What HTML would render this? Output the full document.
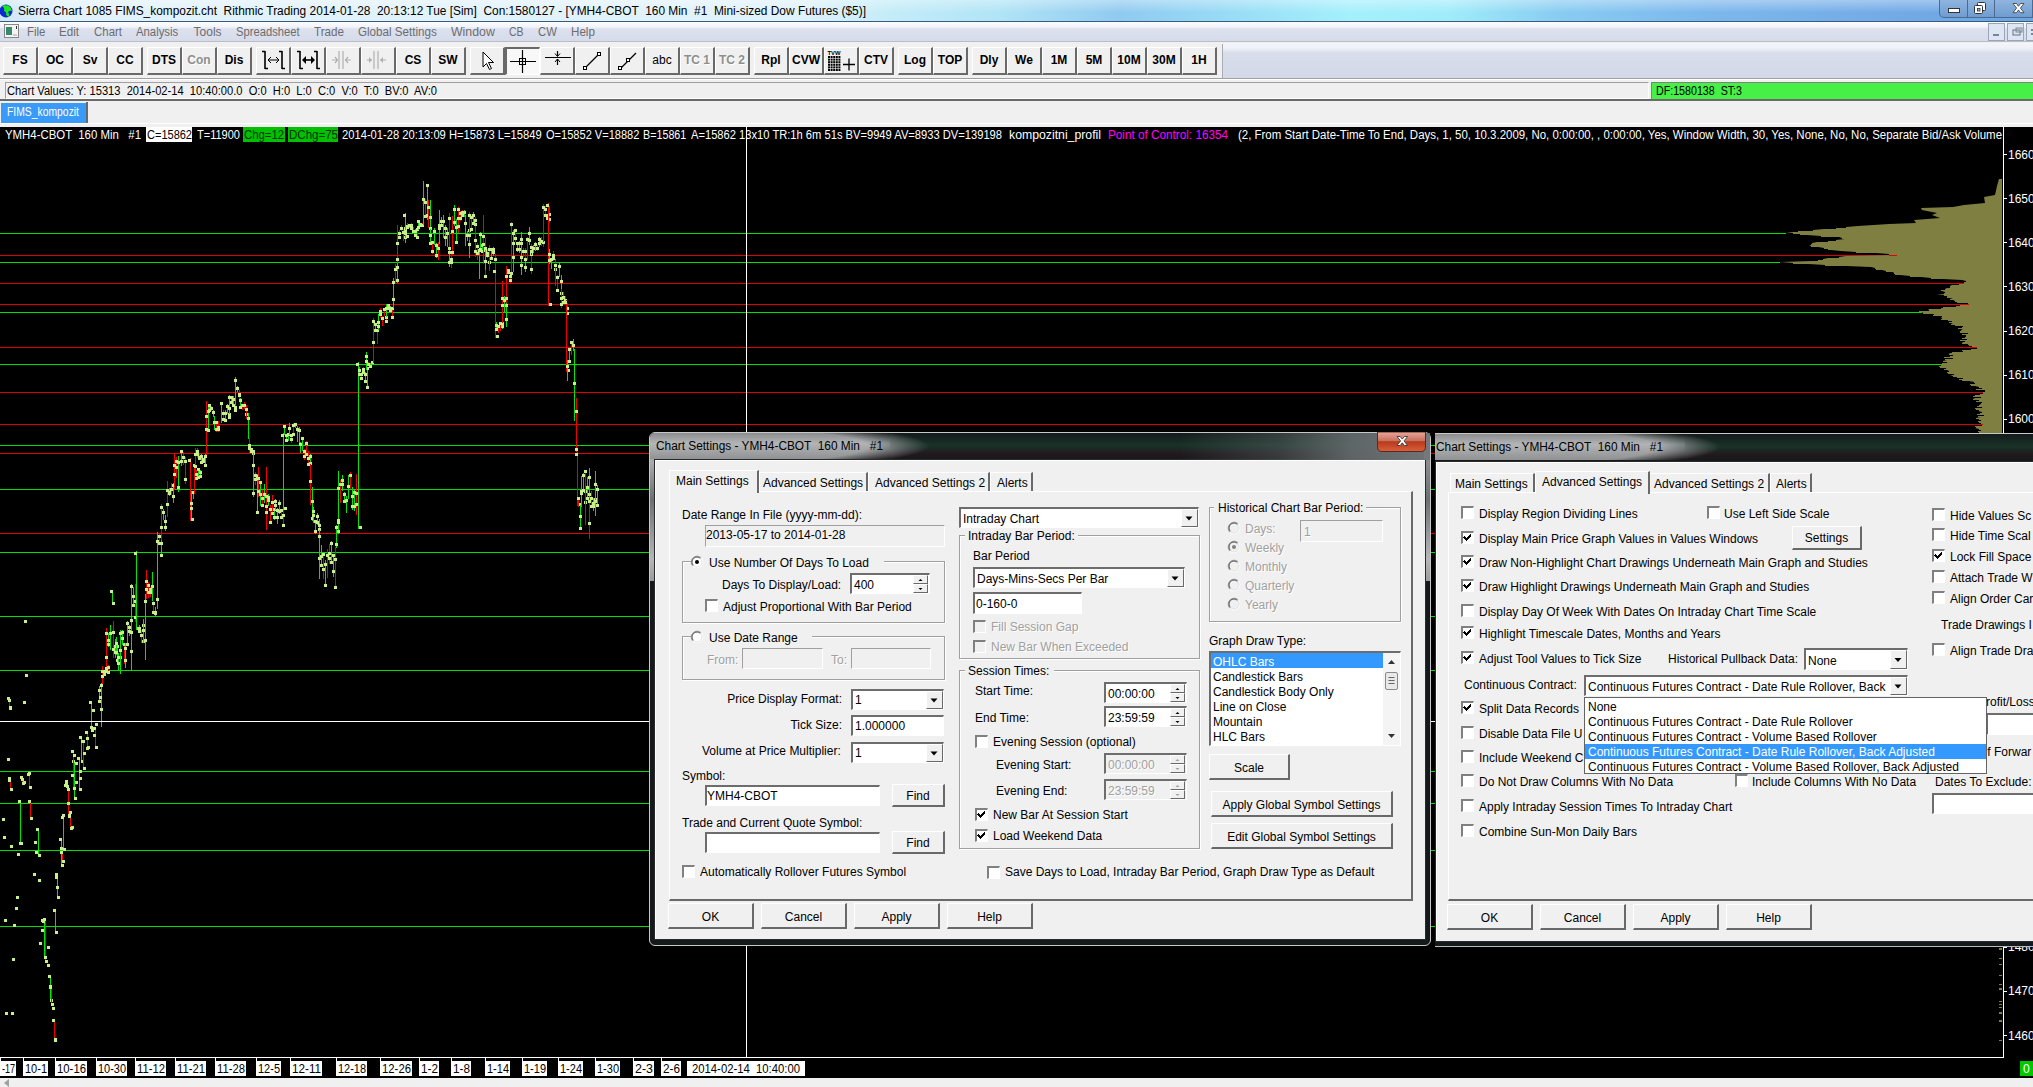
<!DOCTYPE html><html><head><meta charset="utf-8"><title>Sierra Chart</title><style>
html,body{margin:0;padding:0;width:2033px;height:1087px;overflow:hidden;background:#000;}
body{position:relative;font-family:"Liberation Sans",sans-serif;}
div,svg{position:absolute;}
.t{white-space:pre;}
</style></head><body>
<div style="left:0px;top:0px;width:2033px;height:21px;background:linear-gradient(90deg,#cfe6f4 0px,#e2f2fa 60px,#e0f2fa 800px,#c4ecf8 890px,#b0e4f6 1000px,#90caf0 1120px,#98dcf6 1230px,#a4f0fc 1350px,#a0ecfa 1450px,#88ccf2 1560px,#7cb8ec 1700px,#72aae6 1900px,#6ea6e2 2033px);"></div>
<div style="left:0px;top:0px;width:2033px;height:21px;background:linear-gradient(180deg,rgba(255,255,255,0.35),rgba(255,255,255,0) 60%);"></div>
<div style="left:0px;top:21px;width:2033px;height:1px;background:#3c5a7c;"></div>
<svg style="left:0px;top:2px" width="14" height="17"><circle cx="6" cy="9" r="6.5" fill="#0a28d8"/><path d="M2 4 q3 2 2 5 q3 1 2 4 l3 2 q1 -3 -1 -5 q2 -2 4 -1 q-1 -4 -4 -6 q-2 1 -3 0 z" fill="#1ee61e"/></svg>
<div class="t" style="left:18.00px;top:4px;font-size:12px;line-height:14px;color:#000;transform:scaleX(0.9912);transform-origin:0 0;">Sierra Chart 1085 FIMS_kompozit.cht  Rithmic Trading 2014-01-28  20:13:12 Tue [Sim]  Con:1580127 - [YMH4-CBOT  160 Min  #1  Mini-sized Dow Futures ($5)]</div>
<div style="left:1939px;top:0px;width:94px;height:18px;background:linear-gradient(180deg,#8fb4de,#6f9cd0);border:1px solid #4a6a90;border-top:none;border-radius:0 0 0 5px;box-sizing:border-box;"></div>
<div style="left:1967px;top:0px;width:1px;height:17px;background:#4a6a90;"></div>
<div style="left:1994px;top:0px;width:1px;height:17px;background:#4a6a90;"></div>
<svg style="left:1939px;top:0px" width="94" height="18"><rect x="9.5" y="8.5" width="11" height="4" fill="#fff" stroke="#333" stroke-width="1"/><rect x="38.5" y="2.5" width="8" height="8" rx="1" fill="#fff" stroke="#333"/><rect x="35.5" y="5.5" width="8" height="8" rx="1" fill="#fff" stroke="#333"/><rect x="38.5" y="8.5" width="2.5" height="2.5" fill="#8fb4de" stroke="#333" stroke-width="0.8"/><path d="M74 3.5 h3.5 l2 2.8 l2 -2.8 h3.5 l-3.6 4.6 l3.6 4.6 h-3.5 l-2 -2.8 l-2 2.8 h-3.5 l3.6 -4.6 z" fill="#fff" stroke="#333" stroke-width="0.8"/></svg>
<div style="left:0px;top:22px;width:2033px;height:20px;background:linear-gradient(180deg,#fbfcfe 0,#f2f4fa 5px,#dde1ee 7px,#d6dbeb 19px);"></div>
<div style="left:0px;top:41px;width:2033px;height:1px;background:#b9bdc6;"></div>
<svg style="left:4px;top:24px" width="16" height="14"><rect x="0.5" y="0.5" width="14" height="13" fill="#f4f4f4" stroke="#888"/><rect x="2" y="3" width="6" height="8" fill="#3a8a6a"/><rect x="12" y="2" width="1" height="3" fill="#333"/><rect x="9" y="10" width="4" height="2" fill="#ccc"/></svg>
<div class="t" style="left:27.40px;top:25px;font-size:12px;line-height:14px;color:#6d6d6d;transform:scaleX(0.9464);transform-origin:0 0;">File</div>
<div class="t" style="left:59.00px;top:25px;font-size:12px;line-height:14px;color:#6d6d6d;transform:scaleX(0.9672);transform-origin:0 0;">Edit</div>
<div class="t" style="left:93.50px;top:25px;font-size:12px;line-height:14px;color:#6d6d6d;transform:scaleX(0.9542);transform-origin:0 0;">Chart</div>
<div class="t" style="left:136.30px;top:25px;font-size:12px;line-height:14px;color:#6d6d6d;transform:scaleX(0.9444);transform-origin:0 0;">Analysis</div>
<div class="t" style="left:193.60px;top:25px;font-size:12px;line-height:14px;color:#6d6d6d;">Tools</div>
<div class="t" style="left:236.00px;top:25px;font-size:12px;line-height:14px;color:#6d6d6d;transform:scaleX(0.9360);transform-origin:0 0;">Spreadsheet</div>
<div class="t" style="left:314.00px;top:25px;font-size:12px;line-height:14px;color:#6d6d6d;transform:scaleX(0.9675);transform-origin:0 0;">Trade</div>
<div class="t" style="left:358.00px;top:25px;font-size:12px;line-height:14px;color:#6d6d6d;transform:scaleX(0.9683);transform-origin:0 0;">Global Settings</div>
<div class="t" style="left:451.00px;top:25px;font-size:12px;line-height:14px;color:#6d6d6d;transform:scaleX(1.0262);transform-origin:0 0;">Window</div>
<div class="t" style="left:509.00px;top:25px;font-size:12px;line-height:14px;color:#6d6d6d;transform:scaleX(0.8758);transform-origin:0 0;">CB</div>
<div class="t" style="left:538.00px;top:25px;font-size:12px;line-height:14px;color:#6d6d6d;transform:scaleX(0.9404);transform-origin:0 0;">CW</div>
<div class="t" style="left:571.00px;top:25px;font-size:12px;line-height:14px;color:#6d6d6d;transform:scaleX(0.9684);transform-origin:0 0;">Help</div>
<div style="left:1988px;top:23px;width:17px;height:18px;background:#dde6f2;border:1px solid #9aa6b8;box-sizing:border-box;"></div>
<div style="left:2007px;top:23px;width:17px;height:18px;background:#dde6f2;border:1px solid #9aa6b8;box-sizing:border-box;"></div>
<div style="left:2026px;top:23px;width:17px;height:18px;background:#dde6f2;border:1px solid #9aa6b8;box-sizing:border-box;"></div>
<svg style="left:1988px;top:23px" width="45" height="18"><rect x="5" y="11" width="6" height="2" fill="#7a8596"/><rect x="25" y="7" width="7" height="5" fill="none" stroke="#7a8596" stroke-width="1.2"/><rect x="28" y="5" width="6" height="4" fill="none" stroke="#7a8596" stroke-width="1"/><rect x="43" y="6" width="2" height="2" fill="#7a8596"/><rect x="43" y="10" width="2" height="2" fill="#7a8596"/></svg>
<div style="left:0px;top:42px;width:2033px;height:37px;background:#f0f0f0;"></div>
<div style="left:1223px;top:43px;width:810px;height:35px;background:linear-gradient(180deg,#f3f5fa 0,#eef1f8 5px,#d8ddeb 10px,#d4d9e9 34px);"></div>
<div style="left:1222px;top:44px;width:1px;height:34px;background:#a8acb4;"></div>
<div style="left:0px;top:78px;width:2033px;height:1px;background:#a0a0a0;"></div>
<div style="left:0px;top:79px;width:2033px;height:1px;background:#fff;"></div>
<div style="left:3px;top:47px;width:35px;height:28px;background:#f0f0f0;border-top:1px solid #fff;border-left:1px solid #fff;border-right:2px solid #696969;border-bottom:2px solid #696969;box-sizing:border-box;"></div>
<div class="t" style="left:12.33px;top:53px;font-size:12px;line-height:14px;color:#000;font-weight:bold;">FS</div>
<div style="left:38px;top:47px;width:35px;height:28px;background:#f0f0f0;border-top:1px solid #fff;border-left:1px solid #fff;border-right:2px solid #696969;border-bottom:2px solid #696969;box-sizing:border-box;"></div>
<div class="t" style="left:46.00px;top:53px;font-size:12px;line-height:14px;color:#000;font-weight:bold;">OC</div>
<div style="left:73px;top:47px;width:35px;height:28px;background:#f0f0f0;border-top:1px solid #fff;border-left:1px solid #fff;border-right:2px solid #696969;border-bottom:2px solid #696969;box-sizing:border-box;"></div>
<div class="t" style="left:82.66px;top:53px;font-size:12px;line-height:14px;color:#000;font-weight:bold;">Sv</div>
<div style="left:108px;top:47px;width:35px;height:28px;background:#f0f0f0;border-top:1px solid #fff;border-left:1px solid #fff;border-right:2px solid #696969;border-bottom:2px solid #696969;box-sizing:border-box;"></div>
<div class="t" style="left:116.33px;top:53px;font-size:12px;line-height:14px;color:#000;font-weight:bold;">CC</div>
<div style="left:147px;top:47px;width:35px;height:28px;background:#f0f0f0;border-top:1px solid #fff;border-left:1px solid #fff;border-right:2px solid #696969;border-bottom:2px solid #696969;box-sizing:border-box;"></div>
<div class="t" style="left:152.00px;top:53px;font-size:12px;line-height:14px;color:#000;font-weight:bold;">DTS</div>
<div style="left:182px;top:47px;width:35px;height:28px;background:#f0f0f0;border-top:1px solid #fff;border-left:1px solid #fff;border-right:2px solid #696969;border-bottom:2px solid #696969;box-sizing:border-box;"></div>
<div class="t" style="left:187.34px;top:53px;font-size:12px;line-height:14px;color:#8e8e8e;font-weight:bold;text-shadow:1px 1px 0 #fff;">Con</div>
<div style="left:217px;top:47px;width:35px;height:28px;background:#f0f0f0;border-top:1px solid #fff;border-left:1px solid #fff;border-right:2px solid #696969;border-bottom:2px solid #696969;box-sizing:border-box;"></div>
<div class="t" style="left:224.66px;top:53px;font-size:12px;line-height:14px;color:#000;font-weight:bold;">Dis</div>
<div style="left:256px;top:47px;width:35px;height:28px;background:#f0f0f0;border-top:1px solid #fff;border-left:1px solid #fff;border-right:2px solid #696969;border-bottom:2px solid #696969;box-sizing:border-box;"></div>
<div style="left:291px;top:47px;width:35px;height:28px;background:#f0f0f0;border-top:1px solid #fff;border-left:1px solid #fff;border-right:2px solid #696969;border-bottom:2px solid #696969;box-sizing:border-box;"></div>
<div style="left:326px;top:47px;width:35px;height:28px;background:#f0f0f0;border-top:1px solid #fff;border-left:1px solid #fff;border-right:2px solid #696969;border-bottom:2px solid #696969;box-sizing:border-box;"></div>
<div style="left:361px;top:47px;width:35px;height:28px;background:#f0f0f0;border-top:1px solid #fff;border-left:1px solid #fff;border-right:2px solid #696969;border-bottom:2px solid #696969;box-sizing:border-box;"></div>
<div style="left:396px;top:47px;width:35px;height:28px;background:#f0f0f0;border-top:1px solid #fff;border-left:1px solid #fff;border-right:2px solid #696969;border-bottom:2px solid #696969;box-sizing:border-box;"></div>
<div class="t" style="left:404.66px;top:53px;font-size:12px;line-height:14px;color:#000;font-weight:bold;">CS</div>
<div style="left:431px;top:47px;width:35px;height:28px;background:#f0f0f0;border-top:1px solid #fff;border-left:1px solid #fff;border-right:2px solid #696969;border-bottom:2px solid #696969;box-sizing:border-box;"></div>
<div class="t" style="left:438.33px;top:53px;font-size:12px;line-height:14px;color:#000;font-weight:bold;">SW</div>
<div style="left:470px;top:47px;width:35px;height:28px;background:#f0f0f0;border-top:1px solid #fff;border-left:1px solid #fff;border-right:2px solid #696969;border-bottom:2px solid #696969;box-sizing:border-box;"></div>
<div style="left:505px;top:47px;width:35px;height:28px;background:#f8f8f8;border-top:2px solid #696969;border-left:2px solid #696969;border-right:1px solid #fff;border-bottom:1px solid #fff;box-sizing:border-box;"></div>
<div style="left:540px;top:47px;width:35px;height:28px;background:#f0f0f0;border-top:1px solid #fff;border-left:1px solid #fff;border-right:2px solid #696969;border-bottom:2px solid #696969;box-sizing:border-box;"></div>
<div style="left:575px;top:47px;width:35px;height:28px;background:#f0f0f0;border-top:1px solid #fff;border-left:1px solid #fff;border-right:2px solid #696969;border-bottom:2px solid #696969;box-sizing:border-box;"></div>
<div style="left:610px;top:47px;width:35px;height:28px;background:#f0f0f0;border-top:1px solid #fff;border-left:1px solid #fff;border-right:2px solid #696969;border-bottom:2px solid #696969;box-sizing:border-box;"></div>
<div style="left:610px;top:47px;width:35px;height:28px;background:#f0f0f0;border-top:1px solid #fff;border-left:1px solid #fff;border-right:2px solid #696969;border-bottom:2px solid #696969;box-sizing:border-box;"></div>
<div style="left:645px;top:47px;width:35px;height:28px;background:#f0f0f0;border-top:1px solid #fff;border-left:1px solid #fff;border-right:2px solid #696969;border-bottom:2px solid #696969;box-sizing:border-box;"></div>
<div class="t" style="left:652.33px;top:53px;font-size:12px;line-height:14px;color:#000;">abc</div>
<div style="left:680px;top:47px;width:35px;height:28px;background:#f0f0f0;border-top:1px solid #fff;border-left:1px solid #fff;border-right:2px solid #696969;border-bottom:2px solid #696969;box-sizing:border-box;"></div>
<div class="t" style="left:684.00px;top:53px;font-size:12px;line-height:14px;color:#8e8e8e;font-weight:bold;text-shadow:1px 1px 0 #fff;">TC 1</div>
<div style="left:715px;top:47px;width:35px;height:28px;background:#f0f0f0;border-top:1px solid #fff;border-left:1px solid #fff;border-right:2px solid #696969;border-bottom:2px solid #696969;box-sizing:border-box;"></div>
<div class="t" style="left:719.00px;top:53px;font-size:12px;line-height:14px;color:#8e8e8e;font-weight:bold;text-shadow:1px 1px 0 #fff;">TC 2</div>
<div style="left:754px;top:47px;width:35px;height:28px;background:#f0f0f0;border-top:1px solid #fff;border-left:1px solid #fff;border-right:2px solid #696969;border-bottom:2px solid #696969;box-sizing:border-box;"></div>
<div class="t" style="left:761.33px;top:53px;font-size:12px;line-height:14px;color:#000;font-weight:bold;">Rpl</div>
<div style="left:789px;top:47px;width:35px;height:28px;background:#f0f0f0;border-top:1px solid #fff;border-left:1px solid #fff;border-right:2px solid #696969;border-bottom:2px solid #696969;box-sizing:border-box;"></div>
<div class="t" style="left:792.00px;top:53px;font-size:12px;line-height:14px;color:#000;font-weight:bold;">CVW</div>
<div style="left:824px;top:47px;width:35px;height:28px;background:#f0f0f0;border-top:1px solid #fff;border-left:1px solid #fff;border-right:2px solid #696969;border-bottom:2px solid #696969;box-sizing:border-box;"></div>
<div style="left:859px;top:47px;width:35px;height:28px;background:#f0f0f0;border-top:1px solid #fff;border-left:1px solid #fff;border-right:2px solid #696969;border-bottom:2px solid #696969;box-sizing:border-box;"></div>
<div class="t" style="left:864.00px;top:53px;font-size:12px;line-height:14px;color:#000;font-weight:bold;">CTV</div>
<div style="left:898px;top:47px;width:35px;height:28px;background:#f0f0f0;border-top:1px solid #fff;border-left:1px solid #fff;border-right:2px solid #696969;border-bottom:2px solid #696969;box-sizing:border-box;"></div>
<div class="t" style="left:904.00px;top:53px;font-size:12px;line-height:14px;color:#000;font-weight:bold;">Log</div>
<div style="left:933px;top:47px;width:35px;height:28px;background:#f0f0f0;border-top:1px solid #fff;border-left:1px solid #fff;border-right:2px solid #696969;border-bottom:2px solid #696969;box-sizing:border-box;"></div>
<div class="t" style="left:937.77px;top:53px;font-size:12px;line-height:14px;color:#000;font-weight:bold;">TOP</div>
<div style="left:972px;top:47px;width:35px;height:28px;background:#f0f0f0;border-top:1px solid #fff;border-left:1px solid #fff;border-right:2px solid #696969;border-bottom:2px solid #696969;box-sizing:border-box;"></div>
<div class="t" style="left:979.66px;top:53px;font-size:12px;line-height:14px;color:#000;font-weight:bold;">Dly</div>
<div style="left:1007px;top:47px;width:35px;height:28px;background:#f0f0f0;border-top:1px solid #fff;border-left:1px solid #fff;border-right:2px solid #696969;border-bottom:2px solid #696969;box-sizing:border-box;"></div>
<div class="t" style="left:1015.11px;top:53px;font-size:12px;line-height:14px;color:#000;font-weight:bold;">We</div>
<div style="left:1042px;top:47px;width:35px;height:28px;background:#f0f0f0;border-top:1px solid #fff;border-left:1px solid #fff;border-right:2px solid #696969;border-bottom:2px solid #696969;box-sizing:border-box;"></div>
<div class="t" style="left:1050.66px;top:53px;font-size:12px;line-height:14px;color:#000;font-weight:bold;">1M</div>
<div style="left:1077px;top:47px;width:35px;height:28px;background:#f0f0f0;border-top:1px solid #fff;border-left:1px solid #fff;border-right:2px solid #696969;border-bottom:2px solid #696969;box-sizing:border-box;"></div>
<div class="t" style="left:1085.66px;top:53px;font-size:12px;line-height:14px;color:#000;font-weight:bold;">5M</div>
<div style="left:1112px;top:47px;width:35px;height:28px;background:#f0f0f0;border-top:1px solid #fff;border-left:1px solid #fff;border-right:2px solid #696969;border-bottom:2px solid #696969;box-sizing:border-box;"></div>
<div class="t" style="left:1117.33px;top:53px;font-size:12px;line-height:14px;color:#000;font-weight:bold;">10M</div>
<div style="left:1147px;top:47px;width:35px;height:28px;background:#f0f0f0;border-top:1px solid #fff;border-left:1px solid #fff;border-right:2px solid #696969;border-bottom:2px solid #696969;box-sizing:border-box;"></div>
<div class="t" style="left:1152.33px;top:53px;font-size:12px;line-height:14px;color:#000;font-weight:bold;">30M</div>
<div style="left:1182px;top:47px;width:35px;height:28px;background:#f0f0f0;border-top:1px solid #fff;border-left:1px solid #fff;border-right:2px solid #696969;border-bottom:2px solid #696969;box-sizing:border-box;"></div>
<div class="t" style="left:1191.33px;top:53px;font-size:12px;line-height:14px;color:#000;font-weight:bold;">1H</div>
<svg style="left:0;top:39px" width="900" height="36"><g stroke="#000" stroke-width="1.6" fill="none"><path d="M265 12 v18 M262 12.5 h3 M265 29.5 h3 M282 12 v18 M279 12.5 h3 M282 29.5 h3"/></g><path d="M268 21 h11 M268 21 l3 -3 M268 21 l3 3 M279 21 l-3 -3 M279 21 l-3 3" stroke="#000" stroke-width="1" fill="none"/><g stroke="#000" stroke-width="1.6" fill="none"><path d="M300 12 v18 M297 12.5 h3 M300 29.5 h3 M317 12 v18 M314 12.5 h3 M317 29.5 h3"/></g><path d="M303 21 h11" stroke="#000" stroke-width="1.6"/><path d="M302 21 l4 -4 v8 z M315 21 l-4 -4 v8 z" fill="#000"/><g stroke="#b0b0b0" stroke-width="1.2" fill="none"><path d="M339 12 v18 M343 12 v18 M332 21 h5 M335 18 l2.5 3 l-2.5 3 M345 21 h6 M348 18 l-2.5 3 l2.5 3"/><path d="M374 12 v18 M378 12 v18 M367 21 h5 M386 21 h-6"/></g><path d="M372 21 l-3 -3 v6 z M380 21 l3 -3 v6 z" fill="#b0b0b0"/></svg>
<svg style="left:0;top:41px" width="900" height="36"><path d="M483 11 l0 15 l3.5 -3.5 l3 6 l2 -1 l-3 -6 l5 0 z" fill="#fff" stroke="#000" stroke-width="1"/><path d="M510 20.5 h26 M522.5 9 v23" stroke="#000" stroke-width="1.2"/><rect x="519.5" y="17.5" width="6" height="6" fill="none" stroke="#000" stroke-width="1"/><path d="M545 16.5 h26 M557.5 10 v5 M557.5 18 v6" stroke="#000" stroke-width="1.2"/><path d="M555 12.5 l2.5 3 l2.5 -3 M555 21 l2.5 -3 l2.5 3" stroke="#000" fill="none"/><path d="M585 27 l14 -14" stroke="#000" stroke-width="1.2"/><rect x="583.5" y="25.5" width="3" height="3" fill="#fff" stroke="#000"/><rect x="597.5" y="11.5" width="3" height="3" fill="#fff" stroke="#000"/><path d="M621 27 l15 -15" stroke="#000" stroke-width="1.2"/><rect x="618.5" y="25.5" width="3" height="3" fill="#fff" stroke="#000"/><rect x="626.5" y="17.5" width="3" height="3" fill="#fff" stroke="#000"/></svg>
<svg style="left:823px;top:47px" width="35" height="28"><text x="4.5" y="7.5" font-size="6" font-family="Liberation Sans" font-weight="bold" textLength="13" lengthAdjust="spacingAndGlyphs">TVW</text><rect x="5.0" y="9.0" width="2" height="2" fill="#000"/><rect x="7.6" y="9.0" width="2" height="2" fill="#000"/><rect x="10.2" y="9.0" width="2" height="2" fill="#000"/><rect x="12.8" y="9.0" width="2" height="2" fill="#000"/><rect x="15.4" y="9.0" width="2" height="2" fill="#000"/><rect x="5.0" y="11.6" width="2" height="2" fill="#000"/><rect x="7.6" y="11.6" width="2" height="2" fill="#000"/><rect x="10.2" y="11.6" width="2" height="2" fill="#000"/><rect x="12.8" y="11.6" width="2" height="2" fill="#000"/><rect x="15.4" y="11.6" width="2" height="2" fill="#000"/><rect x="5.0" y="14.2" width="2" height="2" fill="#000"/><rect x="7.6" y="14.2" width="2" height="2" fill="#000"/><rect x="10.2" y="14.2" width="2" height="2" fill="#000"/><rect x="12.8" y="14.2" width="2" height="2" fill="#000"/><rect x="15.4" y="14.2" width="2" height="2" fill="#000"/><rect x="5.0" y="16.8" width="2" height="2" fill="#000"/><rect x="7.6" y="16.8" width="2" height="2" fill="#000"/><rect x="10.2" y="16.8" width="2" height="2" fill="#000"/><rect x="12.8" y="16.8" width="2" height="2" fill="#000"/><rect x="15.4" y="16.8" width="2" height="2" fill="#000"/><rect x="5.0" y="19.4" width="2" height="2" fill="#000"/><rect x="7.6" y="19.4" width="2" height="2" fill="#000"/><rect x="10.2" y="19.4" width="2" height="2" fill="#000"/><rect x="12.8" y="19.4" width="2" height="2" fill="#000"/><rect x="15.4" y="19.4" width="2" height="2" fill="#000"/><rect x="5.0" y="22.0" width="2" height="2" fill="#000"/><rect x="7.6" y="22.0" width="2" height="2" fill="#000"/><rect x="10.2" y="22.0" width="2" height="2" fill="#000"/><rect x="12.8" y="22.0" width="2" height="2" fill="#000"/><rect x="15.4" y="22.0" width="2" height="2" fill="#000"/><path d="M20 17.5 h12 M26 11.5 v12" stroke="#000" stroke-width="1.3"/></svg>
<div style="left:0px;top:80px;width:2033px;height:20px;background:#f0f0f0;"></div>
<div style="left:5px;top:82px;width:1644px;height:17px;background:#f0f0f0;border-top:1px solid #a0a0a0;border-left:1px solid #a0a0a0;border-right:1px solid #fff;border-bottom:1px solid #fff;box-sizing:border-box;"></div>
<div class="t" style="left:7.00px;top:84px;font-size:12px;line-height:14px;color:#000;transform:scaleX(0.9279);transform-origin:0 0;">Chart Values: Y: 15313  2014-02-14  10:40:00.0  O:0  H:0  L:0  C:0  V:0  T:0  BV:0  AV:0</div>
<div style="left:1651px;top:82px;width:382px;height:17px;background:#46f046;border-top:1px solid #808080;border-left:1px solid #808080;box-sizing:border-box;"></div>
<div class="t" style="left:1655.50px;top:84px;font-size:12px;line-height:14px;color:#000;transform:scaleX(0.8891);transform-origin:0 0;">DF:1580138  ST:3</div>
<div style="left:0px;top:99px;width:2033px;height:2px;background:#6a6a6a;"></div>
<div style="left:0px;top:101px;width:2033px;height:26px;background:#f0f0f0;"></div>
<div style="left:0px;top:123px;width:2033px;height:1px;background:#fff;"></div>
<div style="left:1px;top:103px;width:86px;height:20px;background:#3a9af8;"></div>
<div style="left:86px;top:102px;width:2px;height:21px;background:#6a6a6a;"></div>
<div class="t" style="left:7.00px;top:105px;font-size:12px;line-height:14px;color:#fff;transform:scaleX(0.8637);transform-origin:0 0;">FIMS_kompozit</div>
<div style="left:0px;top:124px;width:2033px;height:3px;background:#f0f0f0;"></div>
<div style="left:0px;top:127px;width:2033px;height:951px;background:#000;"></div>
<svg style="left:0;top:0" width="2033" height="1087" shape-rendering="crispEdges"><rect x="0" y="233" width="1786" height="1" fill="#00e000"/><rect x="0" y="262" width="1780" height="1" fill="#00e000"/><rect x="0" y="312" width="1922" height="1" fill="#00e000"/><rect x="0" y="364" width="1942" height="1" fill="#00e000"/><rect x="0" y="445" width="1990" height="1" fill="#00e000"/><rect x="0" y="489" width="1990" height="1" fill="#00e000"/><rect x="0" y="552" width="1990" height="1" fill="#00e000"/><rect x="0" y="616" width="1990" height="1" fill="#00e000"/><rect x="0" y="670" width="1990" height="1" fill="#00e000"/><rect x="0" y="771" width="1990" height="1" fill="#00e000"/><rect x="0" y="803" width="1990" height="1" fill="#00e000"/><rect x="0" y="850" width="1990" height="1" fill="#00e000"/><rect x="0" y="926" width="1990" height="1" fill="#00e000"/><rect x="0" y="255" width="1897" height="1" fill="#e00000"/><rect x="0" y="283" width="1964" height="1" fill="#e00000"/><rect x="0" y="304" width="1969" height="1" fill="#e00000"/><rect x="0" y="347" width="1977" height="1" fill="#e00000"/><rect x="0" y="392" width="1983" height="1" fill="#e00000"/><rect x="0" y="424" width="1983" height="1" fill="#e00000"/><rect x="0" y="453" width="1990" height="1" fill="#e00000"/><rect x="0" y="533" width="1990" height="1" fill="#e00000"/></svg>
<svg style="left:0;top:0" width="760" height="1087" shape-rendering="crispEdges"><rect x="112" y="590" width="1" height="14" fill="#00e600"/><rect x="110" y="590" width="3" height="3" fill="#c8f08a"/><rect x="112" y="602" width="3" height="3" fill="#c8f08a"/><rect x="9" y="697" width="1" height="12" fill="#f00000"/><rect x="7" y="697" width="3" height="3" fill="#c8f08a"/><rect x="9" y="707" width="3" height="3" fill="#c8f08a"/><rect x="10" y="779" width="1" height="11" fill="#f00000"/><rect x="8" y="779" width="3" height="3" fill="#c8f08a"/><rect x="10" y="788" width="3" height="3" fill="#c8f08a"/><rect x="22" y="776" width="1" height="8" fill="#f00000"/><rect x="20" y="776" width="3" height="3" fill="#c8f08a"/><rect x="22" y="782" width="3" height="3" fill="#c8f08a"/><rect x="29" y="773" width="1" height="15" fill="#f00000"/><rect x="27" y="773" width="3" height="3" fill="#c8f08a"/><rect x="29" y="786" width="3" height="3" fill="#c8f08a"/><rect x="20" y="800" width="1" height="44" fill="#00e600"/><rect x="18" y="800" width="3" height="3" fill="#c8f08a"/><rect x="20" y="842" width="3" height="3" fill="#c8f08a"/><rect x="30" y="800" width="1" height="19" fill="#f00000"/><rect x="28" y="800" width="3" height="3" fill="#c8f08a"/><rect x="30" y="817" width="3" height="3" fill="#c8f08a"/><rect x="38" y="828" width="1" height="28" fill="#00e600"/><rect x="36" y="828" width="3" height="3" fill="#c8f08a"/><rect x="38" y="854" width="3" height="3" fill="#c8f08a"/><rect x="45" y="918" width="1" height="44" fill="#f00000"/><rect x="43" y="918" width="3" height="3" fill="#c8f08a"/><rect x="45" y="960" width="3" height="3" fill="#c8f08a"/><rect x="44" y="920" width="1" height="38" fill="#00e600"/><rect x="42" y="920" width="3" height="3" fill="#c8f08a"/><rect x="44" y="956" width="3" height="3" fill="#c8f08a"/><rect x="50" y="975" width="1" height="26" fill="#00e600"/><rect x="48" y="975" width="3" height="3" fill="#c8f08a"/><rect x="50" y="999" width="3" height="3" fill="#c8f08a"/><rect x="51" y="985" width="1" height="20" fill="#f00000"/><rect x="49" y="985" width="3" height="3" fill="#c8f08a"/><rect x="51" y="1003" width="3" height="3" fill="#c8f08a"/><rect x="54" y="1019" width="1" height="21" fill="#f00000"/><rect x="52" y="1019" width="3" height="3" fill="#c8f08a"/><rect x="54" y="1038" width="3" height="3" fill="#c8f08a"/><rect x="55" y="909" width="1" height="24" fill="#00e600"/><rect x="53" y="909" width="3" height="3" fill="#c8f08a"/><rect x="55" y="931" width="3" height="3" fill="#c8f08a"/><rect x="57" y="876" width="1" height="22" fill="#00e600"/><rect x="55" y="876" width="3" height="3" fill="#c8f08a"/><rect x="57" y="896" width="3" height="3" fill="#c8f08a"/><rect x="61" y="838" width="1" height="28" fill="#00e600"/><rect x="59" y="838" width="3" height="3" fill="#c8f08a"/><rect x="61" y="864" width="3" height="3" fill="#c8f08a"/><rect x="62" y="851" width="1" height="11" fill="#f00000"/><rect x="60" y="851" width="3" height="3" fill="#c8f08a"/><rect x="62" y="860" width="3" height="3" fill="#c8f08a"/><rect x="63" y="816" width="1" height="34" fill="#00e600"/><rect x="61" y="816" width="3" height="3" fill="#c8f08a"/><rect x="63" y="848" width="3" height="3" fill="#c8f08a"/><rect x="68" y="785" width="1" height="31" fill="#f00000"/><rect x="66" y="785" width="3" height="3" fill="#c8f08a"/><rect x="68" y="814" width="3" height="3" fill="#c8f08a"/><rect x="70" y="815" width="1" height="14" fill="#f00000"/><rect x="68" y="815" width="3" height="3" fill="#c8f08a"/><rect x="70" y="827" width="3" height="3" fill="#c8f08a"/><rect x="74" y="760" width="1" height="39" fill="#00e600"/><rect x="72" y="760" width="3" height="3" fill="#c8f08a"/><rect x="74" y="797" width="3" height="3" fill="#c8f08a"/><rect x="73" y="750" width="1" height="39" fill="#f00000"/><rect x="71" y="750" width="3" height="3" fill="#c8f08a"/><rect x="73" y="787" width="3" height="3" fill="#c8f08a"/><rect x="79" y="757" width="1" height="33" fill="#00e600"/><rect x="77" y="757" width="3" height="3" fill="#c8f08a"/><rect x="79" y="788" width="3" height="3" fill="#c8f08a"/><rect x="81" y="736" width="1" height="26" fill="#00e600"/><rect x="79" y="736" width="3" height="3" fill="#c8f08a"/><rect x="81" y="760" width="3" height="3" fill="#c8f08a"/><rect x="83" y="740" width="1" height="29" fill="#f00000"/><rect x="81" y="740" width="3" height="3" fill="#c8f08a"/><rect x="83" y="767" width="3" height="3" fill="#c8f08a"/><rect x="87" y="731" width="1" height="17" fill="#f00000"/><rect x="85" y="731" width="3" height="3" fill="#c8f08a"/><rect x="87" y="746" width="3" height="3" fill="#c8f08a"/><rect x="91" y="701" width="1" height="30" fill="#00e600"/><rect x="89" y="701" width="3" height="3" fill="#c8f08a"/><rect x="91" y="729" width="3" height="3" fill="#c8f08a"/><rect x="95" y="727" width="1" height="21" fill="#f00000"/><rect x="93" y="727" width="3" height="3" fill="#c8f08a"/><rect x="95" y="746" width="3" height="3" fill="#c8f08a"/><rect x="99" y="686" width="1" height="15" fill="#00e600"/><rect x="98" y="689" width="3" height="3" fill="#c8f08a"/><rect x="98" y="700" width="3" height="3" fill="#c8f08a"/><rect x="101" y="683" width="1" height="44" fill="#00e600"/><rect x="100" y="684" width="3" height="3" fill="#c8f08a"/><rect x="100" y="708" width="3" height="3" fill="#c8f08a"/><rect x="102" y="666" width="1" height="18" fill="#f00000"/><rect x="101" y="670" width="3" height="3" fill="#c8f08a"/><rect x="101" y="675" width="3" height="3" fill="#c8f08a"/><rect x="104" y="671" width="1" height="4" fill="#00e600"/><rect x="103" y="670" width="3" height="3" fill="#c8f08a"/><rect x="103" y="673" width="3" height="3" fill="#c8f08a"/><rect x="106" y="665" width="1" height="7" fill="#f00000"/><rect x="105" y="667" width="3" height="3" fill="#c8f08a"/><rect x="105" y="670" width="3" height="3" fill="#c8f08a"/><rect x="108" y="665" width="1" height="9" fill="#f00000"/><rect x="107" y="666" width="3" height="3" fill="#c8f08a"/><rect x="107" y="671" width="3" height="3" fill="#c8f08a"/><rect x="106" y="628" width="1" height="39" fill="#f00000"/><rect x="105" y="632" width="3" height="3" fill="#c8f08a"/><rect x="105" y="656" width="3" height="3" fill="#c8f08a"/><rect x="108" y="633" width="1" height="14" fill="#00e600"/><rect x="107" y="639" width="3" height="3" fill="#c8f08a"/><rect x="107" y="643" width="3" height="3" fill="#c8f08a"/><rect x="110" y="625" width="1" height="25" fill="#00e600"/><rect x="109" y="632" width="3" height="3" fill="#c8f08a"/><rect x="113" y="621" width="1" height="37" fill="#f00000"/><rect x="112" y="631" width="3" height="3" fill="#c8f08a"/><rect x="112" y="648" width="3" height="3" fill="#c8f08a"/><rect x="115" y="639" width="1" height="19" fill="#00e600"/><rect x="114" y="645" width="3" height="3" fill="#c8f08a"/><rect x="114" y="651" width="3" height="3" fill="#c8f08a"/><rect x="117" y="643" width="1" height="17" fill="#00e600"/><rect x="116" y="645" width="3" height="3" fill="#c8f08a"/><rect x="116" y="659" width="3" height="3" fill="#c8f08a"/><rect x="116" y="637" width="1" height="18" fill="#00e600"/><rect x="115" y="642" width="3" height="3" fill="#c8f08a"/><rect x="115" y="651" width="3" height="3" fill="#c8f08a"/><rect x="118" y="653" width="1" height="18" fill="#00e600"/><rect x="117" y="656" width="3" height="3" fill="#c8f08a"/><rect x="117" y="662" width="3" height="3" fill="#c8f08a"/><rect x="120" y="653" width="1" height="21" fill="#00e600"/><rect x="119" y="656" width="3" height="3" fill="#c8f08a"/><rect x="120" y="630" width="1" height="29" fill="#00e600"/><rect x="119" y="632" width="3" height="3" fill="#c8f08a"/><rect x="119" y="649" width="3" height="3" fill="#c8f08a"/><rect x="122" y="630" width="1" height="15" fill="#00e600"/><rect x="121" y="631" width="3" height="3" fill="#c8f08a"/><rect x="121" y="637" width="3" height="3" fill="#c8f08a"/><rect x="124" y="643" width="1" height="21" fill="#f00000"/><rect x="123" y="643" width="3" height="3" fill="#c8f08a"/><rect x="125" y="643" width="1" height="25" fill="#00e600"/><rect x="124" y="647" width="3" height="3" fill="#c8f08a"/><rect x="124" y="659" width="3" height="3" fill="#c8f08a"/><rect x="127" y="621" width="1" height="23" fill="#00e600"/><rect x="126" y="622" width="3" height="3" fill="#c8f08a"/><rect x="126" y="643" width="3" height="3" fill="#c8f08a"/><rect x="129" y="625" width="1" height="11" fill="#00e600"/><rect x="128" y="626" width="3" height="3" fill="#c8f08a"/><rect x="128" y="630" width="3" height="3" fill="#c8f08a"/><rect x="131" y="623" width="1" height="48" fill="#00e600"/><rect x="130" y="631" width="3" height="3" fill="#c8f08a"/><rect x="130" y="650" width="3" height="3" fill="#c8f08a"/><rect x="131" y="584" width="1" height="41" fill="#00e600"/><rect x="130" y="585" width="3" height="3" fill="#c8f08a"/><rect x="130" y="619" width="3" height="3" fill="#c8f08a"/><rect x="133" y="587" width="1" height="19" fill="#00e600"/><rect x="132" y="595" width="3" height="3" fill="#c8f08a"/><rect x="132" y="604" width="3" height="3" fill="#c8f08a"/><rect x="135" y="584" width="1" height="38" fill="#f00000"/><rect x="134" y="600" width="3" height="3" fill="#c8f08a"/><rect x="134" y="616" width="3" height="3" fill="#c8f08a"/><rect x="136" y="551" width="1" height="79" fill="#00e600"/><rect x="134" y="552" width="3" height="3" fill="#c8f08a"/><rect x="137" y="627" width="3" height="3" fill="#c8f08a"/><rect x="139" y="625" width="1" height="7" fill="#00e600"/><rect x="138" y="627" width="3" height="3" fill="#c8f08a"/><rect x="138" y="630" width="3" height="3" fill="#c8f08a"/><rect x="141" y="630" width="1" height="13" fill="#f00000"/><rect x="140" y="634" width="3" height="3" fill="#c8f08a"/><rect x="143" y="625" width="1" height="18" fill="#00e600"/><rect x="142" y="624" width="3" height="3" fill="#c8f08a"/><rect x="142" y="640" width="3" height="3" fill="#c8f08a"/><rect x="143" y="619" width="1" height="24" fill="#00e600"/><rect x="142" y="629" width="3" height="3" fill="#c8f08a"/><rect x="145" y="594" width="1" height="66" fill="#00e600"/><rect x="144" y="600" width="3" height="3" fill="#c8f08a"/><rect x="144" y="639" width="3" height="3" fill="#c8f08a"/><rect x="146" y="570" width="1" height="29" fill="#f00000"/><rect x="145" y="580" width="3" height="3" fill="#c8f08a"/><rect x="145" y="588" width="3" height="3" fill="#c8f08a"/><rect x="148" y="582" width="1" height="16" fill="#f00000"/><rect x="147" y="584" width="3" height="3" fill="#c8f08a"/><rect x="147" y="591" width="3" height="3" fill="#c8f08a"/><rect x="150" y="587" width="1" height="10" fill="#f00000"/><rect x="149" y="588" width="3" height="3" fill="#c8f08a"/><rect x="149" y="591" width="3" height="3" fill="#c8f08a"/><rect x="152" y="572" width="1" height="29" fill="#00e600"/><rect x="151" y="585" width="3" height="3" fill="#c8f08a"/><rect x="153" y="601" width="1" height="12" fill="#f00000"/><rect x="152" y="602" width="3" height="3" fill="#c8f08a"/><rect x="152" y="611" width="3" height="3" fill="#c8f08a"/><rect x="155" y="607" width="1" height="10" fill="#00e600"/><rect x="154" y="611" width="3" height="3" fill="#c8f08a"/><rect x="154" y="612" width="3" height="3" fill="#c8f08a"/><rect x="157" y="532" width="1" height="77" fill="#00e600"/><rect x="156" y="540" width="3" height="3" fill="#c8f08a"/><rect x="156" y="598" width="3" height="3" fill="#c8f08a"/><rect x="159" y="534" width="1" height="11" fill="#f00000"/><rect x="158" y="535" width="3" height="3" fill="#c8f08a"/><rect x="158" y="542" width="3" height="3" fill="#c8f08a"/><rect x="161" y="538" width="1" height="17" fill="#00e600"/><rect x="160" y="542" width="3" height="3" fill="#c8f08a"/><rect x="160" y="554" width="3" height="3" fill="#c8f08a"/><rect x="161" y="504" width="1" height="36" fill="#f00000"/><rect x="160" y="506" width="3" height="3" fill="#c8f08a"/><rect x="160" y="526" width="3" height="3" fill="#c8f08a"/><rect x="163" y="509" width="1" height="11" fill="#00e600"/><rect x="162" y="511" width="3" height="3" fill="#c8f08a"/><rect x="165" y="515" width="1" height="16" fill="#00e600"/><rect x="164" y="520" width="3" height="3" fill="#c8f08a"/><rect x="164" y="526" width="3" height="3" fill="#c8f08a"/><rect x="167" y="481" width="1" height="36" fill="#f00000"/><rect x="166" y="489" width="3" height="3" fill="#c8f08a"/><rect x="166" y="503" width="3" height="3" fill="#c8f08a"/><rect x="169" y="488" width="1" height="8" fill="#00e600"/><rect x="168" y="491" width="3" height="3" fill="#c8f08a"/><rect x="168" y="492" width="3" height="3" fill="#c8f08a"/><rect x="171" y="483" width="1" height="12" fill="#f00000"/><rect x="170" y="488" width="3" height="3" fill="#c8f08a"/><rect x="173" y="483" width="1" height="20" fill="#00e600"/><rect x="172" y="484" width="3" height="3" fill="#c8f08a"/><rect x="172" y="495" width="3" height="3" fill="#c8f08a"/><rect x="174" y="453" width="1" height="37" fill="#f00000"/><rect x="173" y="464" width="3" height="3" fill="#c8f08a"/><rect x="173" y="473" width="3" height="3" fill="#c8f08a"/><rect x="176" y="457" width="1" height="21" fill="#f00000"/><rect x="175" y="460" width="3" height="3" fill="#c8f08a"/><rect x="175" y="466" width="3" height="3" fill="#c8f08a"/><rect x="178" y="456" width="1" height="36" fill="#00e600"/><rect x="177" y="461" width="3" height="3" fill="#c8f08a"/><rect x="177" y="486" width="3" height="3" fill="#c8f08a"/><rect x="181" y="451" width="1" height="15" fill="#00e600"/><rect x="180" y="450" width="3" height="3" fill="#c8f08a"/><rect x="180" y="460" width="3" height="3" fill="#c8f08a"/><rect x="183" y="452" width="1" height="13" fill="#f00000"/><rect x="182" y="456" width="3" height="3" fill="#c8f08a"/><rect x="185" y="457" width="1" height="27" fill="#f00000"/><rect x="184" y="460" width="3" height="3" fill="#c8f08a"/><rect x="184" y="478" width="3" height="3" fill="#c8f08a"/><rect x="190" y="458" width="1" height="63" fill="#f00000"/><rect x="188" y="459" width="3" height="3" fill="#c8f08a"/><rect x="191" y="518" width="3" height="3" fill="#c8f08a"/><rect x="191" y="491" width="1" height="27" fill="#00e600"/><rect x="190" y="502" width="3" height="3" fill="#c8f08a"/><rect x="190" y="507" width="3" height="3" fill="#c8f08a"/><rect x="193" y="492" width="1" height="7" fill="#00e600"/><rect x="192" y="491" width="3" height="3" fill="#c8f08a"/><rect x="194" y="465" width="1" height="29" fill="#f00000"/><rect x="193" y="464" width="3" height="3" fill="#c8f08a"/><rect x="196" y="470" width="1" height="9" fill="#f00000"/><rect x="195" y="473" width="3" height="3" fill="#c8f08a"/><rect x="195" y="477" width="3" height="3" fill="#c8f08a"/><rect x="198" y="468" width="1" height="9" fill="#00e600"/><rect x="197" y="468" width="3" height="3" fill="#c8f08a"/><rect x="197" y="476" width="3" height="3" fill="#c8f08a"/><rect x="200" y="470" width="1" height="8" fill="#00e600"/><rect x="199" y="471" width="3" height="3" fill="#c8f08a"/><rect x="199" y="475" width="3" height="3" fill="#c8f08a"/><rect x="195" y="448" width="1" height="24" fill="#f00000"/><rect x="194" y="453" width="3" height="3" fill="#c8f08a"/><rect x="194" y="465" width="3" height="3" fill="#c8f08a"/><rect x="197" y="448" width="1" height="10" fill="#f00000"/><rect x="196" y="450" width="3" height="3" fill="#c8f08a"/><rect x="196" y="453" width="3" height="3" fill="#c8f08a"/><rect x="199" y="454" width="1" height="6" fill="#f00000"/><rect x="198" y="456" width="3" height="3" fill="#c8f08a"/><rect x="198" y="457" width="3" height="3" fill="#c8f08a"/><rect x="201" y="454" width="1" height="8" fill="#00e600"/><rect x="200" y="455" width="3" height="3" fill="#c8f08a"/><rect x="200" y="461" width="3" height="3" fill="#c8f08a"/><rect x="203" y="458" width="1" height="4" fill="#00e600"/><rect x="202" y="458" width="3" height="3" fill="#c8f08a"/><rect x="202" y="460" width="3" height="3" fill="#c8f08a"/><rect x="205" y="454" width="1" height="12" fill="#00e600"/><rect x="204" y="455" width="3" height="3" fill="#c8f08a"/><rect x="204" y="464" width="3" height="3" fill="#c8f08a"/><rect x="206" y="401" width="1" height="54" fill="#f00000"/><rect x="205" y="415" width="3" height="3" fill="#c8f08a"/><rect x="205" y="428" width="3" height="3" fill="#c8f08a"/><rect x="208" y="404" width="1" height="28" fill="#00e600"/><rect x="207" y="410" width="3" height="3" fill="#c8f08a"/><rect x="207" y="429" width="3" height="3" fill="#c8f08a"/><rect x="209" y="404" width="1" height="6" fill="#00e600"/><rect x="208" y="404" width="3" height="3" fill="#c8f08a"/><rect x="208" y="409" width="3" height="3" fill="#c8f08a"/><rect x="211" y="406" width="1" height="5" fill="#f00000"/><rect x="210" y="407" width="3" height="3" fill="#c8f08a"/><rect x="213" y="410" width="1" height="7" fill="#00e600"/><rect x="212" y="411" width="3" height="3" fill="#c8f08a"/><rect x="214" y="416" width="1" height="14" fill="#00e600"/><rect x="213" y="421" width="3" height="3" fill="#c8f08a"/><rect x="216" y="422" width="1" height="10" fill="#f00000"/><rect x="215" y="421" width="3" height="3" fill="#c8f08a"/><rect x="215" y="428" width="3" height="3" fill="#c8f08a"/><rect x="218" y="421" width="1" height="11" fill="#f00000"/><rect x="217" y="426" width="3" height="3" fill="#c8f08a"/><rect x="217" y="428" width="3" height="3" fill="#c8f08a"/><rect x="221" y="402" width="1" height="21" fill="#00e600"/><rect x="220" y="402" width="3" height="3" fill="#c8f08a"/><rect x="223" y="410" width="1" height="8" fill="#f00000"/><rect x="222" y="412" width="3" height="3" fill="#c8f08a"/><rect x="222" y="418" width="3" height="3" fill="#c8f08a"/><rect x="225" y="410" width="1" height="10" fill="#00e600"/><rect x="224" y="412" width="3" height="3" fill="#c8f08a"/><rect x="224" y="419" width="3" height="3" fill="#c8f08a"/><rect x="227" y="404" width="1" height="10" fill="#00e600"/><rect x="226" y="405" width="3" height="3" fill="#c8f08a"/><rect x="229" y="413" width="1" height="6" fill="#00e600"/><rect x="228" y="413" width="3" height="3" fill="#c8f08a"/><rect x="228" y="416" width="3" height="3" fill="#c8f08a"/><rect x="229" y="395" width="1" height="19" fill="#00e600"/><rect x="228" y="396" width="3" height="3" fill="#c8f08a"/><rect x="228" y="407" width="3" height="3" fill="#c8f08a"/><rect x="231" y="397" width="1" height="7" fill="#00e600"/><rect x="230" y="396" width="3" height="3" fill="#c8f08a"/><rect x="230" y="401" width="3" height="3" fill="#c8f08a"/><rect x="233" y="396" width="1" height="10" fill="#00e600"/><rect x="232" y="398" width="3" height="3" fill="#c8f08a"/><rect x="232" y="404" width="3" height="3" fill="#c8f08a"/><rect x="235" y="403" width="1" height="8" fill="#f00000"/><rect x="234" y="406" width="3" height="3" fill="#c8f08a"/><rect x="234" y="409" width="3" height="3" fill="#c8f08a"/><rect x="235" y="377" width="1" height="28" fill="#00e600"/><rect x="234" y="379" width="3" height="3" fill="#c8f08a"/><rect x="237" y="386" width="1" height="6" fill="#00e600"/><rect x="236" y="387" width="3" height="3" fill="#c8f08a"/><rect x="239" y="390" width="1" height="9" fill="#f00000"/><rect x="238" y="393" width="3" height="3" fill="#c8f08a"/><rect x="238" y="394" width="3" height="3" fill="#c8f08a"/><rect x="240" y="398" width="1" height="9" fill="#00e600"/><rect x="239" y="399" width="3" height="3" fill="#c8f08a"/><rect x="239" y="406" width="3" height="3" fill="#c8f08a"/><rect x="242" y="405" width="1" height="5" fill="#f00000"/><rect x="241" y="404" width="3" height="3" fill="#c8f08a"/><rect x="244" y="402" width="1" height="7" fill="#f00000"/><rect x="243" y="404" width="3" height="3" fill="#c8f08a"/><rect x="246" y="405" width="1" height="11" fill="#f00000"/><rect x="245" y="408" width="3" height="3" fill="#c8f08a"/><rect x="245" y="413" width="3" height="3" fill="#c8f08a"/><rect x="246" y="408" width="1" height="11" fill="#f00000"/><rect x="245" y="408" width="3" height="3" fill="#c8f08a"/><rect x="248" y="413" width="1" height="26" fill="#00e600"/><rect x="247" y="417" width="3" height="3" fill="#c8f08a"/><rect x="249" y="438" width="1" height="15" fill="#f00000"/><rect x="248" y="444" width="3" height="3" fill="#c8f08a"/><rect x="248" y="447" width="3" height="3" fill="#c8f08a"/><rect x="251" y="448" width="1" height="4" fill="#00e600"/><rect x="250" y="448" width="3" height="3" fill="#c8f08a"/><rect x="250" y="450" width="3" height="3" fill="#c8f08a"/><rect x="253" y="450" width="1" height="4" fill="#00e600"/><rect x="252" y="450" width="3" height="3" fill="#c8f08a"/><rect x="252" y="452" width="3" height="3" fill="#c8f08a"/><rect x="253" y="453" width="1" height="44" fill="#00e600"/><rect x="252" y="464" width="3" height="3" fill="#c8f08a"/><rect x="252" y="492" width="3" height="3" fill="#c8f08a"/><rect x="255" y="472" width="1" height="13" fill="#f00000"/><rect x="254" y="474" width="3" height="3" fill="#c8f08a"/><rect x="254" y="478" width="3" height="3" fill="#c8f08a"/><rect x="257" y="474" width="1" height="39" fill="#00e600"/><rect x="256" y="475" width="3" height="3" fill="#c8f08a"/><rect x="256" y="511" width="3" height="3" fill="#c8f08a"/><rect x="258" y="467" width="1" height="30" fill="#f00000"/><rect x="257" y="477" width="3" height="3" fill="#c8f08a"/><rect x="257" y="490" width="3" height="3" fill="#c8f08a"/><rect x="260" y="481" width="1" height="25" fill="#00e600"/><rect x="259" y="481" width="3" height="3" fill="#c8f08a"/><rect x="259" y="493" width="3" height="3" fill="#c8f08a"/><rect x="262" y="490" width="1" height="16" fill="#f00000"/><rect x="261" y="497" width="3" height="3" fill="#c8f08a"/><rect x="261" y="504" width="3" height="3" fill="#c8f08a"/><rect x="264" y="484" width="1" height="19" fill="#00e600"/><rect x="263" y="493" width="3" height="3" fill="#c8f08a"/><rect x="266" y="467" width="1" height="63" fill="#f00000"/><rect x="265" y="495" width="3" height="3" fill="#c8f08a"/><rect x="265" y="511" width="3" height="3" fill="#c8f08a"/><rect x="266" y="503" width="1" height="8" fill="#f00000"/><rect x="265" y="505" width="3" height="3" fill="#c8f08a"/><rect x="268" y="494" width="1" height="12" fill="#00e600"/><rect x="267" y="496" width="3" height="3" fill="#c8f08a"/><rect x="267" y="499" width="3" height="3" fill="#c8f08a"/><rect x="270" y="505" width="1" height="18" fill="#f00000"/><rect x="269" y="508" width="3" height="3" fill="#c8f08a"/><rect x="269" y="521" width="3" height="3" fill="#c8f08a"/><rect x="272" y="495" width="1" height="19" fill="#f00000"/><rect x="271" y="501" width="3" height="3" fill="#c8f08a"/><rect x="271" y="512" width="3" height="3" fill="#c8f08a"/><rect x="274" y="508" width="1" height="12" fill="#00e600"/><rect x="273" y="508" width="3" height="3" fill="#c8f08a"/><rect x="273" y="516" width="3" height="3" fill="#c8f08a"/><rect x="275" y="499" width="1" height="11" fill="#00e600"/><rect x="274" y="500" width="3" height="3" fill="#c8f08a"/><rect x="274" y="504" width="3" height="3" fill="#c8f08a"/><rect x="277" y="508" width="1" height="16" fill="#00e600"/><rect x="276" y="509" width="3" height="3" fill="#c8f08a"/><rect x="276" y="516" width="3" height="3" fill="#c8f08a"/><rect x="279" y="500" width="1" height="14" fill="#00e600"/><rect x="278" y="502" width="3" height="3" fill="#c8f08a"/><rect x="278" y="510" width="3" height="3" fill="#c8f08a"/><rect x="281" y="509" width="1" height="9" fill="#f00000"/><rect x="280" y="509" width="3" height="3" fill="#c8f08a"/><rect x="280" y="516" width="3" height="3" fill="#c8f08a"/><rect x="283" y="509" width="1" height="17" fill="#f00000"/><rect x="282" y="514" width="3" height="3" fill="#c8f08a"/><rect x="282" y="524" width="3" height="3" fill="#c8f08a"/><rect x="283" y="433" width="1" height="77" fill="#00e600"/><rect x="281" y="434" width="3" height="3" fill="#c8f08a"/><rect x="284" y="507" width="3" height="3" fill="#c8f08a"/><rect x="284" y="425" width="1" height="10" fill="#00e600"/><rect x="283" y="425" width="3" height="3" fill="#c8f08a"/><rect x="286" y="435" width="1" height="6" fill="#00e600"/><rect x="285" y="434" width="3" height="3" fill="#c8f08a"/><rect x="285" y="439" width="3" height="3" fill="#c8f08a"/><rect x="288" y="433" width="1" height="8" fill="#00e600"/><rect x="287" y="433" width="3" height="3" fill="#c8f08a"/><rect x="289" y="423" width="1" height="12" fill="#00e600"/><rect x="288" y="427" width="3" height="3" fill="#c8f08a"/><rect x="291" y="434" width="1" height="9" fill="#f00000"/><rect x="290" y="434" width="3" height="3" fill="#c8f08a"/><rect x="290" y="438" width="3" height="3" fill="#c8f08a"/><rect x="293" y="423" width="1" height="12" fill="#f00000"/><rect x="292" y="424" width="3" height="3" fill="#c8f08a"/><rect x="292" y="433" width="3" height="3" fill="#c8f08a"/><rect x="295" y="423" width="1" height="5" fill="#00e600"/><rect x="294" y="423" width="3" height="3" fill="#c8f08a"/><rect x="297" y="426" width="1" height="16" fill="#00e600"/><rect x="296" y="428" width="3" height="3" fill="#c8f08a"/><rect x="299" y="427" width="1" height="16" fill="#00e600"/><rect x="298" y="429" width="3" height="3" fill="#c8f08a"/><rect x="300" y="442" width="1" height="11" fill="#00e600"/><rect x="299" y="443" width="3" height="3" fill="#c8f08a"/><rect x="302" y="437" width="1" height="14" fill="#00e600"/><rect x="301" y="437" width="3" height="3" fill="#c8f08a"/><rect x="304" y="449" width="1" height="11" fill="#f00000"/><rect x="303" y="450" width="3" height="3" fill="#c8f08a"/><rect x="303" y="455" width="3" height="3" fill="#c8f08a"/><rect x="306" y="441" width="1" height="12" fill="#f00000"/><rect x="305" y="442" width="3" height="3" fill="#c8f08a"/><rect x="305" y="453" width="3" height="3" fill="#c8f08a"/><rect x="308" y="451" width="1" height="14" fill="#f00000"/><rect x="307" y="457" width="3" height="3" fill="#c8f08a"/><rect x="307" y="463" width="3" height="3" fill="#c8f08a"/><rect x="310" y="454" width="1" height="11" fill="#00e600"/><rect x="309" y="455" width="3" height="3" fill="#c8f08a"/><rect x="309" y="462" width="3" height="3" fill="#c8f08a"/><rect x="310" y="464" width="1" height="41" fill="#f00000"/><rect x="309" y="480" width="3" height="3" fill="#c8f08a"/><rect x="312" y="487" width="1" height="34" fill="#00e600"/><rect x="311" y="500" width="3" height="3" fill="#c8f08a"/><rect x="311" y="517" width="3" height="3" fill="#c8f08a"/><rect x="313" y="507" width="1" height="16" fill="#00e600"/><rect x="312" y="510" width="3" height="3" fill="#c8f08a"/><rect x="312" y="514" width="3" height="3" fill="#c8f08a"/><rect x="315" y="520" width="1" height="14" fill="#00e600"/><rect x="314" y="520" width="3" height="3" fill="#c8f08a"/><rect x="314" y="530" width="3" height="3" fill="#c8f08a"/><rect x="317" y="513" width="1" height="12" fill="#00e600"/><rect x="316" y="515" width="3" height="3" fill="#c8f08a"/><rect x="316" y="521" width="3" height="3" fill="#c8f08a"/><rect x="319" y="519" width="1" height="13" fill="#00e600"/><rect x="318" y="524" width="3" height="3" fill="#c8f08a"/><rect x="318" y="528" width="3" height="3" fill="#c8f08a"/><rect x="319" y="530" width="1" height="49" fill="#00e600"/><rect x="318" y="535" width="3" height="3" fill="#c8f08a"/><rect x="318" y="557" width="3" height="3" fill="#c8f08a"/><rect x="321" y="545" width="1" height="22" fill="#00e600"/><rect x="320" y="555" width="3" height="3" fill="#c8f08a"/><rect x="320" y="564" width="3" height="3" fill="#c8f08a"/><rect x="323" y="553" width="1" height="26" fill="#f00000"/><rect x="322" y="553" width="3" height="3" fill="#c8f08a"/><rect x="322" y="568" width="3" height="3" fill="#c8f08a"/><rect x="325" y="560" width="1" height="27" fill="#00e600"/><rect x="324" y="563" width="3" height="3" fill="#c8f08a"/><rect x="324" y="584" width="3" height="3" fill="#c8f08a"/><rect x="327" y="549" width="1" height="29" fill="#f00000"/><rect x="326" y="554" width="3" height="3" fill="#c8f08a"/><rect x="329" y="544" width="1" height="20" fill="#f00000"/><rect x="328" y="552" width="3" height="3" fill="#c8f08a"/><rect x="328" y="557" width="3" height="3" fill="#c8f08a"/><rect x="331" y="541" width="1" height="23" fill="#00e600"/><rect x="330" y="542" width="3" height="3" fill="#c8f08a"/><rect x="330" y="561" width="3" height="3" fill="#c8f08a"/><rect x="333" y="555" width="1" height="22" fill="#00e600"/><rect x="332" y="554" width="3" height="3" fill="#c8f08a"/><rect x="332" y="570" width="3" height="3" fill="#c8f08a"/><rect x="335" y="547" width="1" height="42" fill="#f00000"/><rect x="334" y="558" width="3" height="3" fill="#c8f08a"/><rect x="334" y="586" width="3" height="3" fill="#c8f08a"/><rect x="336" y="525" width="1" height="23" fill="#00e600"/><rect x="335" y="526" width="3" height="3" fill="#c8f08a"/><rect x="335" y="543" width="3" height="3" fill="#c8f08a"/><rect x="338" y="518" width="1" height="16" fill="#00e600"/><rect x="337" y="521" width="3" height="3" fill="#c8f08a"/><rect x="337" y="530" width="3" height="3" fill="#c8f08a"/><rect x="338" y="471" width="1" height="49" fill="#00e600"/><rect x="337" y="487" width="3" height="3" fill="#c8f08a"/><rect x="337" y="519" width="3" height="3" fill="#c8f08a"/><rect x="340" y="480" width="1" height="23" fill="#f00000"/><rect x="339" y="483" width="3" height="3" fill="#c8f08a"/><rect x="342" y="475" width="1" height="16" fill="#00e600"/><rect x="341" y="479" width="3" height="3" fill="#c8f08a"/><rect x="341" y="483" width="3" height="3" fill="#c8f08a"/><rect x="344" y="492" width="1" height="11" fill="#00e600"/><rect x="343" y="493" width="3" height="3" fill="#c8f08a"/><rect x="343" y="500" width="3" height="3" fill="#c8f08a"/><rect x="346" y="496" width="1" height="17" fill="#00e600"/><rect x="345" y="499" width="3" height="3" fill="#c8f08a"/><rect x="348" y="475" width="1" height="24" fill="#00e600"/><rect x="347" y="485" width="3" height="3" fill="#c8f08a"/><rect x="350" y="472" width="1" height="17" fill="#f00000"/><rect x="349" y="474" width="3" height="3" fill="#c8f08a"/><rect x="352" y="487" width="1" height="23" fill="#00e600"/><rect x="351" y="495" width="3" height="3" fill="#c8f08a"/><rect x="351" y="505" width="3" height="3" fill="#c8f08a"/><rect x="354" y="489" width="1" height="22" fill="#00e600"/><rect x="353" y="491" width="3" height="3" fill="#c8f08a"/><rect x="353" y="505" width="3" height="3" fill="#c8f08a"/><rect x="356" y="474" width="1" height="41" fill="#f00000"/><rect x="355" y="492" width="3" height="3" fill="#c8f08a"/><rect x="355" y="503" width="3" height="3" fill="#c8f08a"/><rect x="358" y="362" width="1" height="167" fill="#00e600"/><rect x="356" y="363" width="3" height="3" fill="#c8f08a"/><rect x="359" y="526" width="3" height="3" fill="#c8f08a"/><rect x="359" y="367" width="1" height="9" fill="#00e600"/><rect x="358" y="369" width="3" height="3" fill="#c8f08a"/><rect x="358" y="373" width="3" height="3" fill="#c8f08a"/><rect x="361" y="372" width="1" height="6" fill="#f00000"/><rect x="360" y="373" width="3" height="3" fill="#c8f08a"/><rect x="360" y="377" width="3" height="3" fill="#c8f08a"/><rect x="363" y="367" width="1" height="7" fill="#f00000"/><rect x="362" y="368" width="3" height="3" fill="#c8f08a"/><rect x="362" y="371" width="3" height="3" fill="#c8f08a"/><rect x="365" y="372" width="1" height="10" fill="#00e600"/><rect x="364" y="373" width="3" height="3" fill="#c8f08a"/><rect x="364" y="380" width="3" height="3" fill="#c8f08a"/><rect x="367" y="368" width="1" height="19" fill="#00e600"/><rect x="366" y="367" width="3" height="3" fill="#c8f08a"/><rect x="366" y="386" width="3" height="3" fill="#c8f08a"/><rect x="366" y="352" width="1" height="18" fill="#00e600"/><rect x="365" y="355" width="3" height="3" fill="#c8f08a"/><rect x="365" y="360" width="3" height="3" fill="#c8f08a"/><rect x="368" y="362" width="1" height="4" fill="#f00000"/><rect x="367" y="363" width="3" height="3" fill="#c8f08a"/><rect x="370" y="363" width="1" height="4" fill="#00e600"/><rect x="369" y="365" width="3" height="3" fill="#c8f08a"/><rect x="372" y="361" width="1" height="4" fill="#00e600"/><rect x="371" y="361" width="3" height="3" fill="#c8f08a"/><rect x="373" y="318" width="1" height="45" fill="#f00000"/><rect x="372" y="320" width="3" height="3" fill="#c8f08a"/><rect x="372" y="341" width="3" height="3" fill="#c8f08a"/><rect x="375" y="323" width="1" height="8" fill="#00e600"/><rect x="374" y="323" width="3" height="3" fill="#c8f08a"/><rect x="374" y="329" width="3" height="3" fill="#c8f08a"/><rect x="377" y="329" width="1" height="15" fill="#f00000"/><rect x="376" y="329" width="3" height="3" fill="#c8f08a"/><rect x="378" y="314" width="1" height="16" fill="#00e600"/><rect x="377" y="321" width="3" height="3" fill="#c8f08a"/><rect x="377" y="325" width="3" height="3" fill="#c8f08a"/><rect x="380" y="308" width="1" height="10" fill="#f00000"/><rect x="379" y="310" width="3" height="3" fill="#c8f08a"/><rect x="379" y="313" width="3" height="3" fill="#c8f08a"/><rect x="382" y="316" width="1" height="10" fill="#f00000"/><rect x="381" y="317" width="3" height="3" fill="#c8f08a"/><rect x="384" y="309" width="1" height="7" fill="#f00000"/><rect x="383" y="308" width="3" height="3" fill="#c8f08a"/><rect x="386" y="315" width="1" height="6" fill="#f00000"/><rect x="385" y="316" width="3" height="3" fill="#c8f08a"/><rect x="385" y="320" width="3" height="3" fill="#c8f08a"/><rect x="386" y="304" width="1" height="13" fill="#00e600"/><rect x="385" y="307" width="3" height="3" fill="#c8f08a"/><rect x="388" y="305" width="1" height="4" fill="#f00000"/><rect x="387" y="304" width="3" height="3" fill="#c8f08a"/><rect x="387" y="307" width="3" height="3" fill="#c8f08a"/><rect x="390" y="306" width="1" height="4" fill="#00e600"/><rect x="389" y="307" width="3" height="3" fill="#c8f08a"/><rect x="389" y="309" width="3" height="3" fill="#c8f08a"/><rect x="392" y="307" width="1" height="10" fill="#f00000"/><rect x="391" y="307" width="3" height="3" fill="#c8f08a"/><rect x="391" y="316" width="3" height="3" fill="#c8f08a"/><rect x="393" y="278" width="1" height="30" fill="#00e600"/><rect x="392" y="281" width="3" height="3" fill="#c8f08a"/><rect x="392" y="298" width="3" height="3" fill="#c8f08a"/><rect x="395" y="264" width="1" height="19" fill="#f00000"/><rect x="394" y="268" width="3" height="3" fill="#c8f08a"/><rect x="397" y="261" width="1" height="22" fill="#00e600"/><rect x="396" y="266" width="3" height="3" fill="#c8f08a"/><rect x="396" y="279" width="3" height="3" fill="#c8f08a"/><rect x="397" y="225" width="1" height="38" fill="#f00000"/><rect x="396" y="242" width="3" height="3" fill="#c8f08a"/><rect x="396" y="258" width="3" height="3" fill="#c8f08a"/><rect x="399" y="230" width="1" height="7" fill="#f00000"/><rect x="398" y="232" width="3" height="3" fill="#c8f08a"/><rect x="398" y="236" width="3" height="3" fill="#c8f08a"/><rect x="401" y="225" width="1" height="6" fill="#f00000"/><rect x="400" y="227" width="3" height="3" fill="#c8f08a"/><rect x="403" y="229" width="1" height="12" fill="#f00000"/><rect x="402" y="231" width="3" height="3" fill="#c8f08a"/><rect x="405" y="227" width="1" height="16" fill="#00e600"/><rect x="404" y="227" width="3" height="3" fill="#c8f08a"/><rect x="404" y="236" width="3" height="3" fill="#c8f08a"/><rect x="405" y="213" width="1" height="25" fill="#00e600"/><rect x="403" y="214" width="3" height="3" fill="#c8f08a"/><rect x="406" y="235" width="3" height="3" fill="#c8f08a"/><rect x="405" y="228" width="1" height="7" fill="#00e600"/><rect x="404" y="230" width="3" height="3" fill="#c8f08a"/><rect x="404" y="232" width="3" height="3" fill="#c8f08a"/><rect x="407" y="223" width="1" height="6" fill="#f00000"/><rect x="406" y="225" width="3" height="3" fill="#c8f08a"/><rect x="406" y="226" width="3" height="3" fill="#c8f08a"/><rect x="409" y="224" width="1" height="4" fill="#00e600"/><rect x="408" y="224" width="3" height="3" fill="#c8f08a"/><rect x="411" y="223" width="1" height="7" fill="#f00000"/><rect x="410" y="224" width="3" height="3" fill="#c8f08a"/><rect x="410" y="227" width="3" height="3" fill="#c8f08a"/><rect x="413" y="227" width="1" height="7" fill="#f00000"/><rect x="412" y="230" width="3" height="3" fill="#c8f08a"/><rect x="412" y="230" width="3" height="3" fill="#c8f08a"/><rect x="415" y="229" width="1" height="7" fill="#00e600"/><rect x="414" y="230" width="3" height="3" fill="#c8f08a"/><rect x="414" y="234" width="3" height="3" fill="#c8f08a"/><rect x="417" y="228" width="1" height="9" fill="#f00000"/><rect x="416" y="228" width="3" height="3" fill="#c8f08a"/><rect x="416" y="236" width="3" height="3" fill="#c8f08a"/><rect x="418" y="221" width="1" height="9" fill="#00e600"/><rect x="417" y="220" width="3" height="3" fill="#c8f08a"/><rect x="417" y="226" width="3" height="3" fill="#c8f08a"/><rect x="420" y="223" width="1" height="4" fill="#00e600"/><rect x="419" y="223" width="3" height="3" fill="#c8f08a"/><rect x="419" y="224" width="3" height="3" fill="#c8f08a"/><rect x="422" y="223" width="1" height="4" fill="#f00000"/><rect x="421" y="224" width="3" height="3" fill="#c8f08a"/><rect x="423" y="181" width="1" height="44" fill="#00e600"/><rect x="422" y="198" width="3" height="3" fill="#c8f08a"/><rect x="425" y="199" width="1" height="17" fill="#f00000"/><rect x="424" y="201" width="3" height="3" fill="#c8f08a"/><rect x="424" y="215" width="3" height="3" fill="#c8f08a"/><rect x="427" y="185" width="1" height="35" fill="#00e600"/><rect x="426" y="184" width="3" height="3" fill="#c8f08a"/><rect x="426" y="214" width="3" height="3" fill="#c8f08a"/><rect x="428" y="200" width="1" height="28" fill="#f00000"/><rect x="427" y="206" width="3" height="3" fill="#c8f08a"/><rect x="430" y="200" width="1" height="43" fill="#00e600"/><rect x="429" y="216" width="3" height="3" fill="#c8f08a"/><rect x="429" y="227" width="3" height="3" fill="#c8f08a"/><rect x="430" y="229" width="1" height="14" fill="#00e600"/><rect x="429" y="234" width="3" height="3" fill="#c8f08a"/><rect x="429" y="242" width="3" height="3" fill="#c8f08a"/><rect x="432" y="242" width="1" height="12" fill="#f00000"/><rect x="431" y="241" width="3" height="3" fill="#c8f08a"/><rect x="431" y="250" width="3" height="3" fill="#c8f08a"/><rect x="434" y="228" width="1" height="17" fill="#00e600"/><rect x="433" y="230" width="3" height="3" fill="#c8f08a"/><rect x="436" y="243" width="1" height="15" fill="#00e600"/><rect x="435" y="244" width="3" height="3" fill="#c8f08a"/><rect x="435" y="254" width="3" height="3" fill="#c8f08a"/><rect x="438" y="242" width="1" height="18" fill="#f00000"/><rect x="437" y="247" width="3" height="3" fill="#c8f08a"/><rect x="439" y="210" width="1" height="34" fill="#00e600"/><rect x="438" y="224" width="3" height="3" fill="#c8f08a"/><rect x="438" y="227" width="3" height="3" fill="#c8f08a"/><rect x="441" y="217" width="1" height="10" fill="#00e600"/><rect x="440" y="220" width="3" height="3" fill="#c8f08a"/><rect x="440" y="224" width="3" height="3" fill="#c8f08a"/><rect x="443" y="215" width="1" height="23" fill="#00e600"/><rect x="442" y="220" width="3" height="3" fill="#c8f08a"/><rect x="445" y="225" width="1" height="21" fill="#00e600"/><rect x="444" y="227" width="3" height="3" fill="#c8f08a"/><rect x="444" y="236" width="3" height="3" fill="#c8f08a"/><rect x="447" y="228" width="1" height="19" fill="#00e600"/><rect x="446" y="232" width="3" height="3" fill="#c8f08a"/><rect x="449" y="213" width="1" height="41" fill="#f00000"/><rect x="448" y="217" width="3" height="3" fill="#c8f08a"/><rect x="448" y="247" width="3" height="3" fill="#c8f08a"/><rect x="449" y="250" width="1" height="17" fill="#00e600"/><rect x="448" y="251" width="3" height="3" fill="#c8f08a"/><rect x="448" y="261" width="3" height="3" fill="#c8f08a"/><rect x="451" y="254" width="1" height="14" fill="#f00000"/><rect x="450" y="258" width="3" height="3" fill="#c8f08a"/><rect x="450" y="261" width="3" height="3" fill="#c8f08a"/><rect x="452" y="216" width="1" height="40" fill="#f00000"/><rect x="451" y="230" width="3" height="3" fill="#c8f08a"/><rect x="451" y="251" width="3" height="3" fill="#c8f08a"/><rect x="454" y="205" width="1" height="21" fill="#00e600"/><rect x="453" y="208" width="3" height="3" fill="#c8f08a"/><rect x="453" y="221" width="3" height="3" fill="#c8f08a"/><rect x="456" y="219" width="1" height="24" fill="#00e600"/><rect x="455" y="226" width="3" height="3" fill="#c8f08a"/><rect x="455" y="241" width="3" height="3" fill="#c8f08a"/><rect x="458" y="213" width="1" height="20" fill="#f00000"/><rect x="457" y="217" width="3" height="3" fill="#c8f08a"/><rect x="457" y="225" width="3" height="3" fill="#c8f08a"/><rect x="458" y="207" width="1" height="7" fill="#f00000"/><rect x="457" y="208" width="3" height="3" fill="#c8f08a"/><rect x="460" y="211" width="1" height="10" fill="#f00000"/><rect x="459" y="212" width="3" height="3" fill="#c8f08a"/><rect x="459" y="217" width="3" height="3" fill="#c8f08a"/><rect x="462" y="210" width="1" height="5" fill="#f00000"/><rect x="461" y="211" width="3" height="3" fill="#c8f08a"/><rect x="461" y="214" width="3" height="3" fill="#c8f08a"/><rect x="464" y="210" width="1" height="7" fill="#00e600"/><rect x="463" y="211" width="3" height="3" fill="#c8f08a"/><rect x="465" y="215" width="1" height="31" fill="#00e600"/><rect x="464" y="222" width="3" height="3" fill="#c8f08a"/><rect x="467" y="231" width="1" height="10" fill="#00e600"/><rect x="466" y="234" width="3" height="3" fill="#c8f08a"/><rect x="469" y="214" width="1" height="44" fill="#00e600"/><rect x="468" y="229" width="3" height="3" fill="#c8f08a"/><rect x="468" y="243" width="3" height="3" fill="#c8f08a"/><rect x="469" y="212" width="1" height="28" fill="#f00000"/><rect x="468" y="214" width="3" height="3" fill="#c8f08a"/><rect x="468" y="234" width="3" height="3" fill="#c8f08a"/><rect x="471" y="214" width="1" height="17" fill="#f00000"/><rect x="470" y="216" width="3" height="3" fill="#c8f08a"/><rect x="470" y="228" width="3" height="3" fill="#c8f08a"/><rect x="473" y="212" width="1" height="13" fill="#00e600"/><rect x="472" y="214" width="3" height="3" fill="#c8f08a"/><rect x="472" y="222" width="3" height="3" fill="#c8f08a"/><rect x="475" y="217" width="1" height="11" fill="#f00000"/><rect x="474" y="219" width="3" height="3" fill="#c8f08a"/><rect x="474" y="223" width="3" height="3" fill="#c8f08a"/><rect x="475" y="227" width="1" height="30" fill="#f00000"/><rect x="474" y="239" width="3" height="3" fill="#c8f08a"/><rect x="474" y="250" width="3" height="3" fill="#c8f08a"/><rect x="477" y="243" width="1" height="17" fill="#f00000"/><rect x="476" y="245" width="3" height="3" fill="#c8f08a"/><rect x="476" y="252" width="3" height="3" fill="#c8f08a"/><rect x="479" y="248" width="1" height="31" fill="#00e600"/><rect x="478" y="249" width="3" height="3" fill="#c8f08a"/><rect x="480" y="232" width="1" height="19" fill="#00e600"/><rect x="479" y="233" width="3" height="3" fill="#c8f08a"/><rect x="479" y="248" width="3" height="3" fill="#c8f08a"/><rect x="482" y="244" width="1" height="9" fill="#00e600"/><rect x="481" y="244" width="3" height="3" fill="#c8f08a"/><rect x="481" y="250" width="3" height="3" fill="#c8f08a"/><rect x="483" y="215" width="1" height="49" fill="#f00000"/><rect x="482" y="235" width="3" height="3" fill="#c8f08a"/><rect x="482" y="243" width="3" height="3" fill="#c8f08a"/><rect x="485" y="238" width="1" height="38" fill="#f00000"/><rect x="484" y="249" width="3" height="3" fill="#c8f08a"/><rect x="484" y="275" width="3" height="3" fill="#c8f08a"/><rect x="485" y="247" width="1" height="23" fill="#00e600"/><rect x="484" y="247" width="3" height="3" fill="#c8f08a"/><rect x="484" y="260" width="3" height="3" fill="#c8f08a"/><rect x="487" y="249" width="1" height="9" fill="#f00000"/><rect x="486" y="252" width="3" height="3" fill="#c8f08a"/><rect x="486" y="254" width="3" height="3" fill="#c8f08a"/><rect x="489" y="257" width="1" height="14" fill="#f00000"/><rect x="488" y="261" width="3" height="3" fill="#c8f08a"/><rect x="489" y="245" width="1" height="19" fill="#f00000"/><rect x="488" y="248" width="3" height="3" fill="#c8f08a"/><rect x="491" y="248" width="1" height="10" fill="#00e600"/><rect x="490" y="248" width="3" height="3" fill="#c8f08a"/><rect x="490" y="257" width="3" height="3" fill="#c8f08a"/><rect x="493" y="247" width="1" height="9" fill="#00e600"/><rect x="492" y="248" width="3" height="3" fill="#c8f08a"/><rect x="492" y="251" width="3" height="3" fill="#c8f08a"/><rect x="495" y="254" width="1" height="15" fill="#f00000"/><rect x="494" y="258" width="3" height="3" fill="#c8f08a"/><rect x="495" y="269" width="1" height="69" fill="#f00000"/><rect x="493" y="270" width="3" height="3" fill="#c8f08a"/><rect x="496" y="335" width="3" height="3" fill="#c8f08a"/><rect x="496" y="322" width="1" height="7" fill="#00e600"/><rect x="495" y="324" width="3" height="3" fill="#c8f08a"/><rect x="495" y="328" width="3" height="3" fill="#c8f08a"/><rect x="498" y="325" width="1" height="8" fill="#f00000"/><rect x="497" y="325" width="3" height="3" fill="#c8f08a"/><rect x="500" y="323" width="1" height="8" fill="#f00000"/><rect x="499" y="322" width="3" height="3" fill="#c8f08a"/><rect x="502" y="321" width="1" height="8" fill="#00e600"/><rect x="501" y="322" width="3" height="3" fill="#c8f08a"/><rect x="501" y="325" width="3" height="3" fill="#c8f08a"/><rect x="502" y="281" width="1" height="42" fill="#f00000"/><rect x="501" y="297" width="3" height="3" fill="#c8f08a"/><rect x="501" y="304" width="3" height="3" fill="#c8f08a"/><rect x="504" y="296" width="1" height="16" fill="#00e600"/><rect x="503" y="299" width="3" height="3" fill="#c8f08a"/><rect x="506" y="301" width="1" height="26" fill="#00e600"/><rect x="505" y="304" width="3" height="3" fill="#c8f08a"/><rect x="505" y="318" width="3" height="3" fill="#c8f08a"/><rect x="506" y="266" width="1" height="37" fill="#f00000"/><rect x="505" y="275" width="3" height="3" fill="#c8f08a"/><rect x="505" y="297" width="3" height="3" fill="#c8f08a"/><rect x="508" y="269" width="1" height="5" fill="#f00000"/><rect x="507" y="269" width="3" height="3" fill="#c8f08a"/><rect x="507" y="271" width="3" height="3" fill="#c8f08a"/><rect x="510" y="272" width="1" height="11" fill="#f00000"/><rect x="509" y="275" width="3" height="3" fill="#c8f08a"/><rect x="509" y="279" width="3" height="3" fill="#c8f08a"/><rect x="511" y="222" width="1" height="52" fill="#f00000"/><rect x="510" y="223" width="3" height="3" fill="#c8f08a"/><rect x="510" y="272" width="3" height="3" fill="#c8f08a"/><rect x="513" y="247" width="1" height="25" fill="#00e600"/><rect x="512" y="256" width="3" height="3" fill="#c8f08a"/><rect x="513" y="230" width="1" height="19" fill="#00e600"/><rect x="512" y="232" width="3" height="3" fill="#c8f08a"/><rect x="512" y="242" width="3" height="3" fill="#c8f08a"/><rect x="515" y="230" width="1" height="12" fill="#f00000"/><rect x="514" y="229" width="3" height="3" fill="#c8f08a"/><rect x="514" y="237" width="3" height="3" fill="#c8f08a"/><rect x="517" y="243" width="1" height="9" fill="#00e600"/><rect x="516" y="242" width="3" height="3" fill="#c8f08a"/><rect x="516" y="248" width="3" height="3" fill="#c8f08a"/><rect x="519" y="241" width="1" height="12" fill="#00e600"/><rect x="518" y="242" width="3" height="3" fill="#c8f08a"/><rect x="518" y="248" width="3" height="3" fill="#c8f08a"/><rect x="521" y="232" width="1" height="21" fill="#00e600"/><rect x="520" y="238" width="3" height="3" fill="#c8f08a"/><rect x="520" y="242" width="3" height="3" fill="#c8f08a"/><rect x="521" y="247" width="1" height="28" fill="#00e600"/><rect x="520" y="256" width="3" height="3" fill="#c8f08a"/><rect x="520" y="264" width="3" height="3" fill="#c8f08a"/><rect x="523" y="248" width="1" height="9" fill="#f00000"/><rect x="522" y="250" width="3" height="3" fill="#c8f08a"/><rect x="525" y="248" width="1" height="14" fill="#f00000"/><rect x="524" y="250" width="3" height="3" fill="#c8f08a"/><rect x="525" y="258" width="1" height="14" fill="#00e600"/><rect x="524" y="258" width="3" height="3" fill="#c8f08a"/><rect x="524" y="266" width="3" height="3" fill="#c8f08a"/><rect x="527" y="237" width="1" height="23" fill="#f00000"/><rect x="526" y="238" width="3" height="3" fill="#c8f08a"/><rect x="529" y="227" width="1" height="18" fill="#00e600"/><rect x="528" y="232" width="3" height="3" fill="#c8f08a"/><rect x="528" y="239" width="3" height="3" fill="#c8f08a"/><rect x="531" y="244" width="1" height="30" fill="#f00000"/><rect x="530" y="253" width="3" height="3" fill="#c8f08a"/><rect x="530" y="268" width="3" height="3" fill="#c8f08a"/><rect x="531" y="246" width="1" height="9" fill="#f00000"/><rect x="530" y="246" width="3" height="3" fill="#c8f08a"/><rect x="530" y="250" width="3" height="3" fill="#c8f08a"/><rect x="533" y="245" width="1" height="8" fill="#00e600"/><rect x="532" y="247" width="3" height="3" fill="#c8f08a"/><rect x="535" y="242" width="1" height="9" fill="#00e600"/><rect x="534" y="243" width="3" height="3" fill="#c8f08a"/><rect x="537" y="245" width="1" height="6" fill="#f00000"/><rect x="536" y="247" width="3" height="3" fill="#c8f08a"/><rect x="539" y="237" width="1" height="10" fill="#00e600"/><rect x="538" y="238" width="3" height="3" fill="#c8f08a"/><rect x="538" y="242" width="3" height="3" fill="#c8f08a"/><rect x="541" y="237" width="1" height="9" fill="#f00000"/><rect x="540" y="240" width="3" height="3" fill="#c8f08a"/><rect x="543" y="240" width="1" height="7" fill="#f00000"/><rect x="542" y="241" width="3" height="3" fill="#c8f08a"/><rect x="543" y="204" width="1" height="38" fill="#f00000"/><rect x="542" y="206" width="3" height="3" fill="#c8f08a"/><rect x="545" y="206" width="1" height="10" fill="#f00000"/><rect x="544" y="208" width="3" height="3" fill="#c8f08a"/><rect x="544" y="214" width="3" height="3" fill="#c8f08a"/><rect x="547" y="214" width="1" height="6" fill="#f00000"/><rect x="546" y="214" width="3" height="3" fill="#c8f08a"/><rect x="546" y="217" width="3" height="3" fill="#c8f08a"/><rect x="549" y="206" width="1" height="17" fill="#f00000"/><rect x="548" y="213" width="3" height="3" fill="#c8f08a"/><rect x="548" y="218" width="3" height="3" fill="#c8f08a"/><rect x="548" y="203" width="1" height="103" fill="#f00000"/><rect x="546" y="204" width="3" height="3" fill="#c8f08a"/><rect x="549" y="303" width="3" height="3" fill="#c8f08a"/><rect x="549" y="249" width="1" height="15" fill="#00e600"/><rect x="548" y="253" width="3" height="3" fill="#c8f08a"/><rect x="548" y="259" width="3" height="3" fill="#c8f08a"/><rect x="551" y="259" width="1" height="10" fill="#00e600"/><rect x="550" y="258" width="3" height="3" fill="#c8f08a"/><rect x="553" y="251" width="1" height="10" fill="#f00000"/><rect x="552" y="254" width="3" height="3" fill="#c8f08a"/><rect x="552" y="257" width="3" height="3" fill="#c8f08a"/><rect x="555" y="259" width="1" height="19" fill="#00e600"/><rect x="554" y="268" width="3" height="3" fill="#c8f08a"/><rect x="555" y="260" width="1" height="26" fill="#f00000"/><rect x="554" y="264" width="3" height="3" fill="#c8f08a"/><rect x="557" y="275" width="1" height="17" fill="#f00000"/><rect x="556" y="276" width="3" height="3" fill="#c8f08a"/><rect x="556" y="289" width="3" height="3" fill="#c8f08a"/><rect x="559" y="262" width="1" height="15" fill="#00e600"/><rect x="558" y="265" width="3" height="3" fill="#c8f08a"/><rect x="561" y="275" width="1" height="19" fill="#00e600"/><rect x="560" y="280" width="3" height="3" fill="#c8f08a"/><rect x="560" y="292" width="3" height="3" fill="#c8f08a"/><rect x="561" y="289" width="1" height="19" fill="#f00000"/><rect x="560" y="297" width="3" height="3" fill="#c8f08a"/><rect x="560" y="303" width="3" height="3" fill="#c8f08a"/><rect x="563" y="292" width="1" height="11" fill="#f00000"/><rect x="562" y="296" width="3" height="3" fill="#c8f08a"/><rect x="562" y="301" width="3" height="3" fill="#c8f08a"/><rect x="565" y="296" width="1" height="9" fill="#f00000"/><rect x="564" y="299" width="3" height="3" fill="#c8f08a"/><rect x="567" y="303" width="1" height="10" fill="#f00000"/><rect x="566" y="307" width="3" height="3" fill="#c8f08a"/><rect x="566" y="312" width="3" height="3" fill="#c8f08a"/><rect x="566" y="300" width="1" height="72" fill="#f00000"/><rect x="564" y="301" width="3" height="3" fill="#c8f08a"/><rect x="567" y="369" width="3" height="3" fill="#c8f08a"/><rect x="567" y="360" width="1" height="21" fill="#00e600"/><rect x="566" y="365" width="3" height="3" fill="#c8f08a"/><rect x="569" y="348" width="1" height="13" fill="#00e600"/><rect x="568" y="348" width="3" height="3" fill="#c8f08a"/><rect x="568" y="360" width="3" height="3" fill="#c8f08a"/><rect x="571" y="342" width="1" height="13" fill="#f00000"/><rect x="570" y="341" width="3" height="3" fill="#c8f08a"/><rect x="573" y="339" width="1" height="12" fill="#00e600"/><rect x="572" y="344" width="3" height="3" fill="#c8f08a"/><rect x="574" y="349" width="1" height="72" fill="#00e600"/><rect x="573" y="382" width="3" height="3" fill="#c8f08a"/><rect x="576" y="398" width="1" height="54" fill="#f00000"/><rect x="575" y="410" width="3" height="3" fill="#c8f08a"/><rect x="575" y="448" width="3" height="3" fill="#c8f08a"/><rect x="577" y="452" width="1" height="54" fill="#f00000"/><rect x="575" y="453" width="3" height="3" fill="#c8f08a"/><rect x="578" y="503" width="3" height="3" fill="#c8f08a"/><rect x="578" y="497" width="1" height="10" fill="#f00000"/><rect x="577" y="497" width="3" height="3" fill="#c8f08a"/><rect x="580" y="505" width="1" height="25" fill="#00e600"/><rect x="579" y="515" width="3" height="3" fill="#c8f08a"/><rect x="579" y="527" width="3" height="3" fill="#c8f08a"/><rect x="581" y="476" width="1" height="31" fill="#00e600"/><rect x="580" y="490" width="3" height="3" fill="#c8f08a"/><rect x="580" y="492" width="3" height="3" fill="#c8f08a"/><rect x="583" y="473" width="1" height="19" fill="#00e600"/><rect x="582" y="474" width="3" height="3" fill="#c8f08a"/><rect x="582" y="489" width="3" height="3" fill="#c8f08a"/><rect x="585" y="490" width="1" height="21" fill="#f00000"/><rect x="584" y="490" width="3" height="3" fill="#c8f08a"/><rect x="584" y="501" width="3" height="3" fill="#c8f08a"/><rect x="585" y="471" width="1" height="54" fill="#f00000"/><rect x="584" y="470" width="3" height="3" fill="#c8f08a"/><rect x="587" y="477" width="1" height="22" fill="#00e600"/><rect x="586" y="486" width="3" height="3" fill="#c8f08a"/><rect x="586" y="497" width="3" height="3" fill="#c8f08a"/><rect x="589" y="498" width="1" height="41" fill="#f00000"/><rect x="588" y="500" width="3" height="3" fill="#c8f08a"/><rect x="588" y="522" width="3" height="3" fill="#c8f08a"/><rect x="589" y="468" width="1" height="30" fill="#00e600"/><rect x="588" y="476" width="3" height="3" fill="#c8f08a"/><rect x="588" y="493" width="3" height="3" fill="#c8f08a"/><rect x="591" y="491" width="1" height="15" fill="#f00000"/><rect x="590" y="497" width="3" height="3" fill="#c8f08a"/><rect x="590" y="505" width="3" height="3" fill="#c8f08a"/><rect x="593" y="498" width="1" height="13" fill="#00e600"/><rect x="592" y="502" width="3" height="3" fill="#c8f08a"/><rect x="592" y="505" width="3" height="3" fill="#c8f08a"/><rect x="595" y="498" width="1" height="18" fill="#00e600"/><rect x="594" y="498" width="3" height="3" fill="#c8f08a"/><rect x="595" y="471" width="1" height="33" fill="#00e600"/><rect x="594" y="483" width="3" height="3" fill="#c8f08a"/><rect x="594" y="500" width="3" height="3" fill="#c8f08a"/><rect x="597" y="485" width="1" height="21" fill="#00e600"/><rect x="596" y="488" width="3" height="3" fill="#c8f08a"/><rect x="596" y="504" width="3" height="3" fill="#c8f08a"/><rect x="24" y="620" width="3" height="3" fill="#c8f08a"/><rect x="25" y="674" width="3" height="3" fill="#c8f08a"/><rect x="23" y="701" width="3" height="3" fill="#c8f08a"/><rect x="7" y="758" width="3" height="3" fill="#c8f08a"/><rect x="2" y="818" width="3" height="3" fill="#c8f08a"/><rect x="3" y="836" width="3" height="3" fill="#c8f08a"/><rect x="10" y="845" width="3" height="3" fill="#c8f08a"/><rect x="17" y="853" width="3" height="3" fill="#c8f08a"/><rect x="33" y="873" width="3" height="3" fill="#c8f08a"/><rect x="38" y="879" width="3" height="3" fill="#c8f08a"/><rect x="16" y="896" width="3" height="3" fill="#c8f08a"/><rect x="15" y="907" width="3" height="3" fill="#c8f08a"/><rect x="4" y="919" width="3" height="3" fill="#c8f08a"/><rect x="13" y="924" width="3" height="3" fill="#c8f08a"/><rect x="41" y="919" width="3" height="3" fill="#c8f08a"/><rect x="41" y="929" width="3" height="3" fill="#c8f08a"/><rect x="39" y="942" width="3" height="3" fill="#c8f08a"/><rect x="47" y="946" width="3" height="3" fill="#c8f08a"/><rect x="47" y="964" width="3" height="3" fill="#c8f08a"/><rect x="49" y="986" width="3" height="3" fill="#c8f08a"/><rect x="52" y="1007" width="3" height="3" fill="#c8f08a"/><rect x="5" y="1012" width="3" height="3" fill="#c8f08a"/><rect x="11" y="1012" width="3" height="3" fill="#c8f08a"/><rect x="54" y="1039" width="3" height="3" fill="#c8f08a"/><rect x="12" y="958" width="3" height="3" fill="#c8f08a"/><rect x="19" y="842" width="3" height="3" fill="#c8f08a"/><rect x="8" y="699" width="3" height="3" fill="#c8f08a"/><rect x="9" y="706" width="3" height="3" fill="#c8f08a"/><rect x="28" y="772" width="3" height="3" fill="#c8f08a"/><rect x="29" y="786" width="3" height="3" fill="#c8f08a"/><rect x="23" y="781" width="3" height="3" fill="#c8f08a"/><rect x="34" y="841" width="3" height="3" fill="#c8f08a"/><rect x="35" y="851" width="3" height="3" fill="#c8f08a"/><rect x="56" y="886" width="3" height="3" fill="#c8f08a"/><rect x="55" y="873" width="3" height="3" fill="#c8f08a"/><rect x="60" y="847" width="3" height="3" fill="#c8f08a"/><rect x="62" y="814" width="3" height="3" fill="#c8f08a"/><rect x="65" y="780" width="3" height="3" fill="#c8f08a"/><rect x="64" y="784" width="3" height="3" fill="#c8f08a"/><rect x="67" y="802" width="3" height="3" fill="#c8f08a"/><rect x="69" y="811" width="3" height="3" fill="#c8f08a"/><rect x="71" y="826" width="3" height="3" fill="#c8f08a"/><rect x="99" y="696" width="3" height="3" fill="#c8f08a"/><rect x="92" y="709" width="3" height="3" fill="#c8f08a"/><rect x="90" y="726" width="3" height="3" fill="#c8f08a"/><rect x="95" y="723" width="3" height="3" fill="#c8f08a"/><rect x="93" y="734" width="3" height="3" fill="#c8f08a"/><rect x="86" y="737" width="3" height="3" fill="#c8f08a"/><rect x="82" y="740" width="3" height="3" fill="#c8f08a"/><rect x="86" y="747" width="3" height="3" fill="#c8f08a"/><rect x="83" y="752" width="3" height="3" fill="#c8f08a"/><rect x="79" y="770" width="3" height="3" fill="#c8f08a"/><rect x="73" y="754" width="3" height="3" fill="#c8f08a"/><rect x="75" y="762" width="3" height="3" fill="#c8f08a"/><rect x="71" y="774" width="3" height="3" fill="#c8f08a"/><rect x="21" y="778" width="3" height="3" fill="#c8f08a"/><rect x="8" y="777" width="3" height="3" fill="#c8f08a"/><rect x="65" y="782" width="3" height="3" fill="#c8f08a"/><rect x="67" y="788" width="3" height="3" fill="#c8f08a"/><rect x="75" y="781" width="3" height="3" fill="#c8f08a"/><rect x="79" y="777" width="3" height="3" fill="#c8f08a"/></svg>
<svg style="left:0;top:0" width="2033" height="1087"><polygon points="2002,179 1999,179 1997,186 1995,195 1984,197 1985,203 1964,205 1953,207 1921,208 1922,210 1937,213 1932,215 1940,218 1914,220 1916,223 1889,224 1858,226 1846,227 1846,228 1836,228 1836,229 1824,229 1813,230 1813,231 1798,231 1798,232 1786,232 1793,233 1793,234 1800,234 1800,235 1807,235 1821,236 1821,237 1839,237 1842,238 1842,239 1845,239 1836,240 1836,241 1828,241 1828,242 1817,242 1812,243 1812,244 1811,244 1811,245 1809,245 1811,246 1811,247 1818,247 1824,248 1824,249 1828,249 1828,250 1831,250 1841,251 1856,252 1856,253 1876,253 1889,254 1889,255 1897,255 1846,256 1839,257 1839,258 1828,258 1823,259 1823,260 1818,260 1818,261 1812,261 1780,262 1793,263 1793,264 1809,264 1825,265 1825,266 1846,266 1871,267 1875,268 1875,269 1876,269 1876,270 1882,270 1886,271 1886,272 1893,272 1894,273 1894,274 1895,274 1895,275 1900,275 1910,276 1910,277 1921,277 1931,278 1931,279 1943,279 1962,280 1966,281 1966,282 1964,282 1964,283 1964,283 1959,284 1959,285 1952,285 1950,286 1950,287 1950,287 1950,288 1947,288 1945,289 1945,290 1941,290 1941,291 1942,291 1945,292 1945,293 1944,293 1944,294 1937,294 1944,295 1944,296 1947,296 1947,297 1947,297 1947,298 1953,298 1950,299 1950,300 1953,300 1955,301 1955,302 1957,302 1957,303 1968,303 1968,304 1969,304 1960,305 1960,306 1956,306 1956,307 1943,307 1943,308 1941,308 1941,309 1928,309 1929,310 1929,311 1919,311 1919,312 1922,312 1923,313 1923,314 1934,314 1934,315 1933,315 1933,316 1942,316 1942,317 1941,317 1942,318 1942,319 1941,319 1941,320 1948,320 1948,321 1952,321 1952,322 1949,322 1949,323 1953,323 1951,324 1951,325 1955,325 1955,326 1963,326 1963,327 1962,327 1962,328 1958,328 1958,329 1963,329 1961,330 1961,331 1960,331 1960,332 1960,332 1960,333 1968,333 1968,334 1962,334 1962,335 1966,335 1966,336 1966,337 1965,337 1965,338 1962,338 1962,339 1967,339 1967,340 1960,340 1960,341 1965,341 1965,342 1963,342 1962,343 1962,344 1968,344 1968,345 1969,345 1969,346 1972,346 1972,347 1977,347 1977,348 1977,349 1971,349 1971,350 1962,350 1962,351 1963,351 1963,352 1952,352 1952,353 1950,353 1949,354 1949,355 1953,355 1953,356 1950,356 1950,357 1944,357 1944,358 1953,358 1953,359 1945,359 1945,360 1947,360 1943,361 1943,362 1947,362 1947,363 1942,363 1942,364 1942,364 1941,365 1941,366 1939,366 1939,367 1940,367 1940,368 1946,368 1946,369 1944,369 1944,370 1947,370 1949,371 1949,372 1947,372 1947,373 1948,373 1948,374 1954,374 1954,375 1950,375 1953,376 1953,377 1957,377 1957,378 1963,378 1963,379 1959,379 1959,380 1962,380 1962,381 1969,381 1974,382 1974,383 1975,383 1975,384 1970,384 1970,385 1971,385 1971,386 1975,386 1979,387 1979,388 1982,388 1982,389 1976,389 1976,390 1985,390 1985,391 1985,391 1985,392 1983,392 1983,393 1983,394 1980,394 1980,395 1975,395 1975,396 1973,396 1973,397 1981,397 1981,398 1975,398 1973,399 1973,400 1979,400 1979,401 1976,401 1976,402 1982,402 1982,403 1981,403 1981,404 1981,404 1979,405 1979,406 1977,406 1977,407 1982,407 1982,408 1975,408 1975,409 1976,409 1976,410 1979,410 1979,411 1978,411 1982,412 1982,413 1980,413 1980,414 1977,414 1977,415 1984,415 1984,416 1978,416 1978,417 1981,417 1976,418 1976,419 1979,419 1979,420 1981,420 1981,421 1978,421 1978,422 1979,422 1979,423 1981,423 1981,424 1983,424 1982,425 1982,426 1975,426 1975,427 1976,427 1976,428 1975,428 1979,429 1979,430 1981,430 1981,431 1978,431 1978,432 1979,432 1979,433 1978,433 1978,434 1974,434 1974,435 1973,435 1973,436 1974,436 1974,437 1983,437 1983,438 1981,438 1981,439 1984,439 1984,440 1980,440 2002,445" fill="#7f7f41"/><rect x="1889" y="255" width="8" height="1" fill="#e00000"/><rect x="1956" y="283" width="8" height="1" fill="#e00000"/><rect x="1961" y="304" width="8" height="1" fill="#e00000"/><rect x="1969" y="347" width="8" height="1" fill="#e00000"/><rect x="1975" y="392" width="8" height="1" fill="#e00000"/><rect x="1975" y="424" width="8" height="1" fill="#e00000"/><rect x="1999" y="948" width="3" height="2" fill="#7f7f41"/><rect x="1999" y="958" width="3" height="1" fill="#7f7f41"/><rect x="1999" y="964" width="3" height="1" fill="#7f7f41"/><rect x="1999" y="975" width="3" height="1" fill="#7f7f41"/><rect x="1999" y="984" width="3" height="1" fill="#7f7f41"/><rect x="1999" y="988" width="3" height="2" fill="#7f7f41"/><rect x="1999" y="1001" width="3" height="1" fill="#7f7f41"/><rect x="1999" y="1004" width="3" height="1" fill="#7f7f41"/><rect x="1999" y="1007" width="3" height="1" fill="#7f7f41"/><rect x="1999" y="1012" width="3" height="2" fill="#7f7f41"/><rect x="1999" y="1020" width="3" height="2" fill="#7f7f41"/><rect x="1999" y="1040" width="3" height="1" fill="#7f7f41"/></svg>
<div style="left:746px;top:127px;width:1px;height:930px;background:#fff;"></div>
<div style="left:0px;top:721px;width:2003px;height:1px;background:#fff;"></div>
<div style="left:2003px;top:127px;width:1px;height:931px;background:#fff;"></div>
<div style="left:0px;top:1057px;width:2004px;height:1px;background:#fff;"></div>
<div style="left:2003px;top:154px;width:4px;height:1px;background:#fff;"></div>
<div class="t" style="left:2008.00px;top:148px;font-size:12px;line-height:14px;color:#fff;">16600</div>
<div style="left:2003px;top:198px;width:4px;height:1px;background:#fff;"></div>
<div class="t" style="left:2008.00px;top:192px;font-size:12px;line-height:14px;color:#fff;">16500</div>
<div style="left:2003px;top:242px;width:4px;height:1px;background:#fff;"></div>
<div class="t" style="left:2008.00px;top:236px;font-size:12px;line-height:14px;color:#fff;">16400</div>
<div style="left:2003px;top:286px;width:4px;height:1px;background:#fff;"></div>
<div class="t" style="left:2008.00px;top:280px;font-size:12px;line-height:14px;color:#fff;">16300</div>
<div style="left:2003px;top:331px;width:4px;height:1px;background:#fff;"></div>
<div class="t" style="left:2008.00px;top:324px;font-size:12px;line-height:14px;color:#fff;">16200</div>
<div style="left:2003px;top:375px;width:4px;height:1px;background:#fff;"></div>
<div class="t" style="left:2008.00px;top:368px;font-size:12px;line-height:14px;color:#fff;">16100</div>
<div style="left:2003px;top:419px;width:4px;height:1px;background:#fff;"></div>
<div class="t" style="left:2008.00px;top:412px;font-size:12px;line-height:14px;color:#fff;">16000</div>
<div style="left:2003px;top:463px;width:4px;height:1px;background:#fff;"></div>
<div class="t" style="left:2008.00px;top:456px;font-size:12px;line-height:14px;color:#fff;">15900</div>
<div style="left:2003px;top:507px;width:4px;height:1px;background:#fff;"></div>
<div class="t" style="left:2008.00px;top:500px;font-size:12px;line-height:14px;color:#fff;">15800</div>
<div style="left:2003px;top:551px;width:4px;height:1px;background:#fff;"></div>
<div class="t" style="left:2008.00px;top:544px;font-size:12px;line-height:14px;color:#fff;">15700</div>
<div style="left:2003px;top:595px;width:4px;height:1px;background:#fff;"></div>
<div class="t" style="left:2008.00px;top:588px;font-size:12px;line-height:14px;color:#fff;">15600</div>
<div style="left:2003px;top:639px;width:4px;height:1px;background:#fff;"></div>
<div class="t" style="left:2008.00px;top:632px;font-size:12px;line-height:14px;color:#fff;">15500</div>
<div style="left:2003px;top:683px;width:4px;height:1px;background:#fff;"></div>
<div class="t" style="left:2008.00px;top:676px;font-size:12px;line-height:14px;color:#fff;">15400</div>
<div style="left:2003px;top:727px;width:4px;height:1px;background:#fff;"></div>
<div class="t" style="left:2008.00px;top:720px;font-size:12px;line-height:14px;color:#fff;">15300</div>
<div style="left:2003px;top:771px;width:4px;height:1px;background:#fff;"></div>
<div class="t" style="left:2008.00px;top:764px;font-size:12px;line-height:14px;color:#fff;">15200</div>
<div style="left:2003px;top:815px;width:4px;height:1px;background:#fff;"></div>
<div class="t" style="left:2008.00px;top:808px;font-size:12px;line-height:14px;color:#fff;">15100</div>
<div style="left:2003px;top:859px;width:4px;height:1px;background:#fff;"></div>
<div class="t" style="left:2008.00px;top:852px;font-size:12px;line-height:14px;color:#fff;">15000</div>
<div style="left:2003px;top:903px;width:4px;height:1px;background:#fff;"></div>
<div class="t" style="left:2008.00px;top:896px;font-size:12px;line-height:14px;color:#fff;">14900</div>
<div style="left:2003px;top:947px;width:4px;height:1px;background:#fff;"></div>
<div class="t" style="left:2008.00px;top:940px;font-size:12px;line-height:14px;color:#fff;">14800</div>
<div style="left:2003px;top:991px;width:4px;height:1px;background:#fff;"></div>
<div class="t" style="left:2008.00px;top:984px;font-size:12px;line-height:14px;color:#fff;">14700</div>
<div style="left:2003px;top:1035px;width:4px;height:1px;background:#fff;"></div>
<div class="t" style="left:2008.00px;top:1029px;font-size:12px;line-height:14px;color:#fff;">14600</div>
<div style="left:649px;top:432px;width:782px;height:514px;background:#141a1b;border-radius:6px 6px 6px 6px;box-sizing:border-box;border:1px solid #c8c8c8;"></div>
<div style="left:650px;top:433px;width:780px;height:27px;border-radius:5px 5px 0 0;background:linear-gradient(180deg,rgba(0,0,0,0.0) 0%,rgba(30,80,55,0.45) 45%,rgba(60,20,30,0.35) 80%,rgba(0,0,0,0) 100%);"></div>
<div style="left:650px;top:433px;width:5px;height:148px;background:linear-gradient(180deg,#8e9092 0%,#a8aaac 20%,#6c7074 45%,#b4b6b8 85%,#9a9c9e 100%);border-radius:5px 0 0 0;"></div>
<div style="left:1424px;top:433px;width:6px;height:148px;background:linear-gradient(180deg,#707478 0%,#8a8c8e 20%,#6c7074 45%,#b4b6b8 85%,#9a9c9e 100%);"></div>
<div style="left:650px;top:433px;width:285px;height:26px;border-radius:5px 0 0 0;background:radial-gradient(ellipse 280px 26px at 0px 50%,rgba(172,174,176,1) 0%,rgba(168,170,172,1) 78%,rgba(150,152,154,0.5) 90%,rgba(40,44,46,0) 100%);"></div>
<div style="left:650px;top:433px;width:240px;height:26px;background:linear-gradient(180deg,rgba(0,0,0,0.18) 0%,rgba(255,255,255,0.10) 40%,rgba(0,0,0,0.15) 100%);"></div>
<div class="t" style="left:656.00px;top:439px;font-size:12px;line-height:14px;color:#000;transform:scaleX(0.9885);transform-origin:0 0;">Chart Settings - YMH4-CBOT  160 Min   #1</div>
<div style="left:654px;top:459px;width:772px;height:481px;background:#f0f0f0;border:1px solid #2a2a2a;box-sizing:border-box;"></div>
<div style="left:655px;top:460px;width:770px;height:479px;background:#f0f0f0;border-top:1px solid #fff;border-left:1px solid #fff;box-sizing:border-box;"></div>
<div style="left:1180px;top:433px;width:250px;height:27px;background:linear-gradient(90deg,rgba(110,116,118,0) 0px,rgba(90,100,100,0.45) 100px,rgba(105,112,114,0.85) 170px,rgba(116,120,124,0.95) 250px);border-radius:0 5px 0 0;"></div>
<svg style="left:1377px;top:432px" width="49" height="20"><defs><linearGradient id="cg" x1="0" y1="0" x2="0" y2="1"><stop offset="0" stop-color="#e8a89a"/><stop offset="0.45" stop-color="#c8705c"/><stop offset="0.5" stop-color="#b83a1c"/><stop offset="1" stop-color="#d8603c"/></linearGradient></defs><path d="M0.5 0 v15 q0 4.5 4.5 4.5 h39 q4.5 0 4.5 -4.5 v-15 z" fill="url(#cg)" stroke="#5a2a20" stroke-width="1"/><path d="M20 4.5 h3.2 l2.1 2.6 l2.1 -2.6 h3.2 l-3.6 4.4 l3.6 4.6 h-3.2 l-2.1 -2.7 l-2.1 2.7 h-3.2 l3.6 -4.6 z" fill="#fff" stroke="#3a3a3a" stroke-width="0.9"/></svg>
<div style="left:669px;top:491px;width:744px;height:410px;border-top:1px solid #fff;border-left:1px solid #fff;border-right:2px solid #696969;border-bottom:2px solid #696969;box-sizing:border-box;"></div>
<div style="left:759px;top:472px;width:109px;height:19px;background:#f0f0f0;border-top:1px solid #fff;border-left:1px solid #fff;border-right:2px solid #696969;box-sizing:border-box;"></div>
<div class="t" style="left:763.00px;top:476px;font-size:12px;line-height:14px;color:#000;">Advanced Settings</div>
<div style="left:868px;top:472px;width:122px;height:19px;background:#f0f0f0;border-top:1px solid #fff;border-left:1px solid #fff;border-right:2px solid #696969;box-sizing:border-box;"></div>
<div class="t" style="left:875.00px;top:476px;font-size:12px;line-height:14px;color:#000;">Advanced Settings 2</div>
<div style="left:990px;top:472px;width:43px;height:19px;background:#f0f0f0;border-top:1px solid #fff;border-left:1px solid #fff;border-right:2px solid #696969;box-sizing:border-box;"></div>
<div class="t" style="left:997.00px;top:476px;font-size:12px;line-height:14px;color:#000;">Alerts</div>
<div style="left:669px;top:470px;width:90px;height:23px;background:#f0f0f0;border-top:1px solid #fff;border-left:1px solid #fff;border-right:2px solid #696969;box-sizing:border-box;"></div>
<div class="t" style="left:676.00px;top:474px;font-size:12px;line-height:14px;color:#000;">Main Settings</div>
<div class="t" style="left:682.00px;top:508px;font-size:12px;line-height:14px;color:#000;">Date Range In File (yyyy-mm-dd):</div>
<div style="left:705px;top:525px;width:240px;height:22px;background:#f0f0f0;border-top:1px solid #a0a0a0;border-left:1px solid #a0a0a0;border-right:1px solid #fff;border-bottom:1px solid #fff;box-sizing:border-box;"></div>
<div class="t" style="left:706.00px;top:528px;font-size:12px;line-height:14px;color:#000;">2013-05-17 to 2014-01-28</div>
<div style="left:682px;top:561px;width:263px;height:62px;border:1px solid #a0a0a0;box-shadow:inset 1px 1px 0 #fff, 1px 1px 0 #fff;box-sizing:border-box;"></div>
<div style="left:694px;top:556px;width:190px;height:10px;background:#f0f0f0;"></div>
<svg style="left:690px;top:555px" width="14" height="14"><circle cx="7" cy="7" r="6" fill="#fff"/><path d="M2.76 11.24 A6 6 0 0 1 11.24 2.76" stroke="#a0a0a0" stroke-width="1" fill="none"/><path d="M3.46 10.54 A5 5 0 0 1 10.54 3.46" stroke="#505050" stroke-width="1" fill="none"/><path d="M11.24 2.76 A6 6 0 0 1 2.76 11.24" stroke="#ffffff" stroke-width="1" fill="none"/><path d="M10.54 3.46 A5 5 0 0 1 3.46 10.54" stroke="#e3e3e3" stroke-width="1" fill="none"/><circle cx="7" cy="7" r="2" fill="#000"/></svg>
<div class="t" style="left:709.00px;top:556px;font-size:12px;line-height:14px;color:#000;">Use Number Of Days To Load</div>
<div class="t" style="left:722.00px;top:578px;font-size:12px;line-height:14px;color:#000;">Days To Display/Load:</div>
<div style="left:850px;top:573px;width:80px;height:21px;background:#fff;border-top:2px solid #6d6d6d;border-left:2px solid #6d6d6d;border-right:1px solid #fff;border-bottom:1px solid #fff;box-sizing:border-box;"></div>
<div style="left:913px;top:575px;width:15px;height:9px;background:#f0f0f0;border-top:1px solid #fff;border-left:1px solid #fff;border-right:1px solid #696969;border-bottom:1px solid #696969;box-sizing:border-box;"></div>
<div style="left:913px;top:584px;width:15px;height:9px;background:#f0f0f0;border-top:1px solid #fff;border-left:1px solid #fff;border-right:1px solid #696969;border-bottom:1px solid #696969;box-sizing:border-box;"></div>
<svg style="left:913px;top:575px" width="15" height="18"><path d="M5.5 6.0 h4 l-2 -2 z M5.5 13.0 h4 l-2 2 z" fill="#000"/></svg>
<div class="t" style="left:854.00px;top:578px;font-size:12px;line-height:14px;color:#000;">400</div>
<div style="left:705px;top:599px;width:13px;height:13px;background:#fff;border-top:2px solid #808080;border-left:2px solid #808080;border-right:1px solid #fff;border-bottom:1px solid #fff;box-sizing:border-box;"></div>
<div class="t" style="left:723.00px;top:600px;font-size:12px;line-height:14px;color:#000;">Adjust Proportional With Bar Period</div>
<div style="left:682px;top:636px;width:263px;height:44px;border:1px solid #a0a0a0;box-shadow:inset 1px 1px 0 #fff, 1px 1px 0 #fff;box-sizing:border-box;"></div>
<div style="left:694px;top:631px;width:118px;height:10px;background:#f0f0f0;"></div>
<svg style="left:690px;top:630px" width="14" height="14"><circle cx="7" cy="7" r="6" fill="#fff"/><path d="M2.76 11.24 A6 6 0 0 1 11.24 2.76" stroke="#a0a0a0" stroke-width="1" fill="none"/><path d="M3.46 10.54 A5 5 0 0 1 10.54 3.46" stroke="#505050" stroke-width="1" fill="none"/><path d="M11.24 2.76 A6 6 0 0 1 2.76 11.24" stroke="#ffffff" stroke-width="1" fill="none"/><path d="M10.54 3.46 A5 5 0 0 1 3.46 10.54" stroke="#e3e3e3" stroke-width="1" fill="none"/></svg>
<div class="t" style="left:709.00px;top:631px;font-size:12px;line-height:14px;color:#000;">Use Date Range</div>
<div class="t" style="left:707.00px;top:653px;font-size:12px;line-height:14px;color:#8a8a8a;color:#a0a0a0;text-shadow:1px 1px 0 #fff;">From:</div>
<div style="left:742px;top:648px;width:81px;height:21px;background:#f0f0f0;border-top:1px solid #a0a0a0;border-left:1px solid #a0a0a0;border-right:1px solid #fff;border-bottom:1px solid #fff;box-sizing:border-box;"></div>
<div class="t" style="left:831.00px;top:653px;font-size:12px;line-height:14px;color:#8a8a8a;color:#a0a0a0;text-shadow:1px 1px 0 #fff;">To:</div>
<div style="left:851px;top:648px;width:80px;height:21px;background:#f0f0f0;border-top:1px solid #a0a0a0;border-left:1px solid #a0a0a0;border-right:1px solid #fff;border-bottom:1px solid #fff;box-sizing:border-box;"></div>
<div class="t" style="left:727.31px;top:692px;font-size:12px;line-height:14px;color:#000;">Price Display Format:</div>
<div style="left:851px;top:689px;width:93px;height:21px;background:#fff;border-top:2px solid #6d6d6d;border-left:2px solid #6d6d6d;border-right:1px solid #fff;border-bottom:1px solid #fff;box-sizing:border-box;"></div>
<div style="left:926px;top:691px;width:17px;height:18px;background:#f0f0f0;border-top:1px solid #fff;border-left:1px solid #fff;border-right:1px solid #696969;border-bottom:1px solid #696969;box-sizing:border-box;"></div>
<svg style="left:926px;top:691px" width="17" height="18"><path d="M4.5 7.5 h7 l-3.5 4 z" fill="#000"/></svg>
<div class="t" style="left:855.00px;top:693px;font-size:12px;line-height:14px;color:#000;">1</div>
<div class="t" style="left:790.44px;top:718px;font-size:12px;line-height:14px;color:#000;">Tick Size:</div>
<div style="left:851px;top:715px;width:93px;height:21px;background:#fff;border-top:2px solid #6d6d6d;border-left:2px solid #6d6d6d;border-right:1px solid #fff;border-bottom:1px solid #fff;box-sizing:border-box;"></div>
<div class="t" style="left:855.00px;top:719px;font-size:12px;line-height:14px;color:#000;">1.000000</div>
<div class="t" style="left:702.00px;top:744px;font-size:12px;line-height:14px;color:#000;">Volume at Price Multiplier:</div>
<div style="left:851px;top:742px;width:93px;height:21px;background:#fff;border-top:2px solid #6d6d6d;border-left:2px solid #6d6d6d;border-right:1px solid #fff;border-bottom:1px solid #fff;box-sizing:border-box;"></div>
<div style="left:926px;top:744px;width:17px;height:18px;background:#f0f0f0;border-top:1px solid #fff;border-left:1px solid #fff;border-right:1px solid #696969;border-bottom:1px solid #696969;box-sizing:border-box;"></div>
<svg style="left:926px;top:744px" width="17" height="18"><path d="M4.5 7.5 h7 l-3.5 4 z" fill="#000"/></svg>
<div class="t" style="left:855.00px;top:746px;font-size:12px;line-height:14px;color:#000;">1</div>
<div class="t" style="left:682.00px;top:769px;font-size:12px;line-height:14px;color:#000;">Symbol:</div>
<div style="left:705px;top:785px;width:175px;height:21px;background:#fff;border-top:2px solid #6d6d6d;border-left:2px solid #6d6d6d;border-right:1px solid #fff;border-bottom:1px solid #fff;box-sizing:border-box;"></div>
<div class="t" style="left:707.00px;top:789px;font-size:12px;line-height:14px;color:#000;">YMH4-CBOT</div>
<div style="left:892px;top:784px;width:53px;height:23px;background:#f0f0f0;border-top:1px solid #fff;border-left:1px solid #fff;border-right:2px solid #696969;border-bottom:2px solid #696969;box-sizing:border-box;"></div>
<div class="t" style="left:906.33px;top:789px;font-size:12px;line-height:14px;color:#000;">Find</div>
<div class="t" style="left:682.00px;top:816px;font-size:12px;line-height:14px;color:#000;">Trade and Current Quote Symbol:</div>
<div style="left:705px;top:832px;width:175px;height:21px;background:#fff;border-top:2px solid #6d6d6d;border-left:2px solid #6d6d6d;border-right:1px solid #fff;border-bottom:1px solid #fff;box-sizing:border-box;"></div>
<div style="left:892px;top:831px;width:53px;height:23px;background:#f0f0f0;border-top:1px solid #fff;border-left:1px solid #fff;border-right:2px solid #696969;border-bottom:2px solid #696969;box-sizing:border-box;"></div>
<div class="t" style="left:906.33px;top:836px;font-size:12px;line-height:14px;color:#000;">Find</div>
<div style="left:682px;top:865px;width:13px;height:13px;background:#fff;border-top:2px solid #808080;border-left:2px solid #808080;border-right:1px solid #fff;border-bottom:1px solid #fff;box-sizing:border-box;"></div>
<div class="t" style="left:700.00px;top:865px;font-size:12px;line-height:14px;color:#000;">Automatically Rollover Futures Symbol</div>
<div style="left:959px;top:507px;width:240px;height:21px;background:#fff;border-top:2px solid #6d6d6d;border-left:2px solid #6d6d6d;border-right:1px solid #fff;border-bottom:1px solid #fff;box-sizing:border-box;"></div>
<div style="left:1181px;top:509px;width:17px;height:18px;background:#f0f0f0;border-top:1px solid #fff;border-left:1px solid #fff;border-right:1px solid #696969;border-bottom:1px solid #696969;box-sizing:border-box;"></div>
<svg style="left:1181px;top:509px" width="17" height="18"><path d="M4.5 7.5 h7 l-3.5 4 z" fill="#000"/></svg>
<div class="t" style="left:963.00px;top:512px;font-size:12px;line-height:14px;color:#000;">Intraday Chart</div>
<div style="left:959px;top:535px;width:241px;height:124px;border:1px solid #a0a0a0;box-shadow:inset 1px 1px 0 #fff, 1px 1px 0 #fff;box-sizing:border-box;"></div>
<div style="left:965px;top:530px;width:113px;height:10px;background:#f0f0f0;"></div>
<div class="t" style="left:968.00px;top:529px;font-size:12px;line-height:14px;color:#000;">Intraday Bar Period:</div>
<div class="t" style="left:973.00px;top:549px;font-size:12px;line-height:14px;color:#000;">Bar Period</div>
<div style="left:973px;top:567px;width:212px;height:21px;background:#fff;border-top:2px solid #6d6d6d;border-left:2px solid #6d6d6d;border-right:1px solid #fff;border-bottom:1px solid #fff;box-sizing:border-box;"></div>
<div style="left:1167px;top:569px;width:17px;height:18px;background:#f0f0f0;border-top:1px solid #fff;border-left:1px solid #fff;border-right:1px solid #696969;border-bottom:1px solid #696969;box-sizing:border-box;"></div>
<svg style="left:1167px;top:569px" width="17" height="18"><path d="M4.5 7.5 h7 l-3.5 4 z" fill="#000"/></svg>
<div class="t" style="left:977.00px;top:572px;font-size:12px;line-height:14px;color:#000;">Days-Mins-Secs Per Bar</div>
<div style="left:973px;top:592px;width:109px;height:22px;background:#fff;border-top:2px solid #6d6d6d;border-left:2px solid #6d6d6d;border-right:1px solid #fff;border-bottom:1px solid #fff;box-sizing:border-box;"></div>
<div class="t" style="left:976.00px;top:597px;font-size:12px;line-height:14px;color:#000;">0-160-0</div>
<div style="left:973px;top:620px;width:13px;height:13px;background:#f0f0f0;border-top:2px solid #808080;border-left:2px solid #808080;border-right:1px solid #fff;border-bottom:1px solid #fff;box-sizing:border-box;"></div>
<div class="t" style="left:991.00px;top:620px;font-size:12px;line-height:14px;color:#8a8a8a;color:#a0a0a0;text-shadow:1px 1px 0 #fff;">Fill Session Gap</div>
<div style="left:973px;top:640px;width:13px;height:13px;background:#f0f0f0;border-top:2px solid #808080;border-left:2px solid #808080;border-right:1px solid #fff;border-bottom:1px solid #fff;box-sizing:border-box;"></div>
<div class="t" style="left:991.00px;top:640px;font-size:12px;line-height:14px;color:#8a8a8a;color:#a0a0a0;text-shadow:1px 1px 0 #fff;">New Bar When Exceeded</div>
<div style="left:959px;top:670px;width:241px;height:179px;border:1px solid #a0a0a0;box-shadow:inset 1px 1px 0 #fff, 1px 1px 0 #fff;box-sizing:border-box;"></div>
<div style="left:965px;top:665px;width:89px;height:10px;background:#f0f0f0;"></div>
<div class="t" style="left:968.00px;top:664px;font-size:12px;line-height:14px;color:#000;">Session Times:</div>
<div class="t" style="left:975.00px;top:684px;font-size:12px;line-height:14px;color:#000;">Start Time:</div>
<div style="left:1104px;top:682px;width:83px;height:21px;background:#fff;border-top:2px solid #6d6d6d;border-left:2px solid #6d6d6d;border-right:1px solid #fff;border-bottom:1px solid #fff;box-sizing:border-box;"></div>
<div style="left:1170px;top:684px;width:15px;height:9px;background:#f0f0f0;border-top:1px solid #fff;border-left:1px solid #fff;border-right:1px solid #696969;border-bottom:1px solid #696969;box-sizing:border-box;"></div>
<div style="left:1170px;top:693px;width:15px;height:9px;background:#f0f0f0;border-top:1px solid #fff;border-left:1px solid #fff;border-right:1px solid #696969;border-bottom:1px solid #696969;box-sizing:border-box;"></div>
<svg style="left:1170px;top:684px" width="15" height="18"><path d="M5.5 6.0 h4 l-2 -2 z M5.5 13.0 h4 l-2 2 z" fill="#000"/></svg>
<div class="t" style="left:1108.00px;top:687px;font-size:12px;line-height:14px;color:#000;">00:00:00</div>
<div class="t" style="left:975.00px;top:711px;font-size:12px;line-height:14px;color:#000;">End Time:</div>
<div style="left:1104px;top:706px;width:83px;height:21px;background:#fff;border-top:2px solid #6d6d6d;border-left:2px solid #6d6d6d;border-right:1px solid #fff;border-bottom:1px solid #fff;box-sizing:border-box;"></div>
<div style="left:1170px;top:708px;width:15px;height:9px;background:#f0f0f0;border-top:1px solid #fff;border-left:1px solid #fff;border-right:1px solid #696969;border-bottom:1px solid #696969;box-sizing:border-box;"></div>
<div style="left:1170px;top:717px;width:15px;height:9px;background:#f0f0f0;border-top:1px solid #fff;border-left:1px solid #fff;border-right:1px solid #696969;border-bottom:1px solid #696969;box-sizing:border-box;"></div>
<svg style="left:1170px;top:708px" width="15" height="18"><path d="M5.5 6.0 h4 l-2 -2 z M5.5 13.0 h4 l-2 2 z" fill="#000"/></svg>
<div class="t" style="left:1108.00px;top:711px;font-size:12px;line-height:14px;color:#000;">23:59:59</div>
<div style="left:975px;top:735px;width:13px;height:13px;background:#fff;border-top:2px solid #808080;border-left:2px solid #808080;border-right:1px solid #fff;border-bottom:1px solid #fff;box-sizing:border-box;"></div>
<div class="t" style="left:993.00px;top:735px;font-size:12px;line-height:14px;color:#000;">Evening Session (optional)</div>
<div class="t" style="left:996.00px;top:758px;font-size:12px;line-height:14px;color:#000;">Evening Start:</div>
<div style="left:1104px;top:753px;width:83px;height:21px;background:#f0f0f0;border-top:2px solid #6d6d6d;border-left:2px solid #6d6d6d;border-right:1px solid #fff;border-bottom:1px solid #fff;box-sizing:border-box;"></div>
<div style="left:1170px;top:755px;width:15px;height:9px;background:#f0f0f0;border-top:1px solid #fff;border-left:1px solid #fff;border-right:1px solid #696969;border-bottom:1px solid #696969;box-sizing:border-box;"></div>
<div style="left:1170px;top:764px;width:15px;height:9px;background:#f0f0f0;border-top:1px solid #fff;border-left:1px solid #fff;border-right:1px solid #696969;border-bottom:1px solid #696969;box-sizing:border-box;"></div>
<svg style="left:1170px;top:755px" width="15" height="18"><path d="M5.5 6.0 h4 l-2 -2 z M5.5 13.0 h4 l-2 2 z" fill="#a0a0a0"/></svg>
<div class="t" style="left:1108.00px;top:758px;font-size:12px;line-height:14px;color:#8a8a8a;color:#a0a0a0;text-shadow:1px 1px 0 #fff;">00:00:00</div>
<div class="t" style="left:996.00px;top:784px;font-size:12px;line-height:14px;color:#000;">Evening End:</div>
<div style="left:1104px;top:779px;width:83px;height:21px;background:#f0f0f0;border-top:2px solid #6d6d6d;border-left:2px solid #6d6d6d;border-right:1px solid #fff;border-bottom:1px solid #fff;box-sizing:border-box;"></div>
<div style="left:1170px;top:781px;width:15px;height:9px;background:#f0f0f0;border-top:1px solid #fff;border-left:1px solid #fff;border-right:1px solid #696969;border-bottom:1px solid #696969;box-sizing:border-box;"></div>
<div style="left:1170px;top:790px;width:15px;height:9px;background:#f0f0f0;border-top:1px solid #fff;border-left:1px solid #fff;border-right:1px solid #696969;border-bottom:1px solid #696969;box-sizing:border-box;"></div>
<svg style="left:1170px;top:781px" width="15" height="18"><path d="M5.5 6.0 h4 l-2 -2 z M5.5 13.0 h4 l-2 2 z" fill="#a0a0a0"/></svg>
<div class="t" style="left:1108.00px;top:784px;font-size:12px;line-height:14px;color:#8a8a8a;color:#a0a0a0;text-shadow:1px 1px 0 #fff;">23:59:59</div>
<div style="left:975px;top:808px;width:13px;height:13px;background:#fff;border-top:2px solid #808080;border-left:2px solid #808080;border-right:1px solid #fff;border-bottom:1px solid #fff;box-sizing:border-box;"></div>
<svg style="left:975px;top:808px" width="13" height="13" shape-rendering="crispEdges"><path d="M3 5h1v1h1v1h1v-1h1v-1h1v-1h1v-1h1v3h-1v1h-1v1h-1v1h-1v1h-1v-1h-1v-1h-1v-1h-1z" fill="#000"/></svg>
<div class="t" style="left:993.00px;top:808px;font-size:12px;line-height:14px;color:#000;">New Bar At Session Start</div>
<div style="left:975px;top:829px;width:13px;height:13px;background:#fff;border-top:2px solid #808080;border-left:2px solid #808080;border-right:1px solid #fff;border-bottom:1px solid #fff;box-sizing:border-box;"></div>
<svg style="left:975px;top:829px" width="13" height="13" shape-rendering="crispEdges"><path d="M3 5h1v1h1v1h1v-1h1v-1h1v-1h1v-1h1v3h-1v1h-1v1h-1v1h-1v1h-1v-1h-1v-1h-1v-1h-1z" fill="#000"/></svg>
<div class="t" style="left:993.00px;top:829px;font-size:12px;line-height:14px;color:#000;">Load Weekend Data</div>
<div style="left:987px;top:866px;width:13px;height:13px;background:#fff;border-top:2px solid #808080;border-left:2px solid #808080;border-right:1px solid #fff;border-bottom:1px solid #fff;box-sizing:border-box;"></div>
<div class="t" style="left:1005.00px;top:865px;font-size:12px;line-height:14px;color:#000;">Save Days to Load, Intraday Bar Period, Graph Draw Type as Default</div>
<div style="left:1209px;top:507px;width:192px;height:115px;border:1px solid #a0a0a0;box-shadow:inset 1px 1px 0 #fff, 1px 1px 0 #fff;box-sizing:border-box;"></div>
<div style="left:1214px;top:502px;width:152px;height:10px;background:#f0f0f0;"></div>
<div class="t" style="left:1218.00px;top:501px;font-size:12px;line-height:14px;color:#000;">Historical Chart Bar Period:</div>
<svg style="left:1227px;top:521px" width="14" height="14"><circle cx="7" cy="7" r="6" fill="#f0f0f0"/><path d="M2.76 11.24 A6 6 0 0 1 11.24 2.76" stroke="#a0a0a0" stroke-width="1" fill="none"/><path d="M3.46 10.54 A5 5 0 0 1 10.54 3.46" stroke="#505050" stroke-width="1" fill="none"/><path d="M11.24 2.76 A6 6 0 0 1 2.76 11.24" stroke="#ffffff" stroke-width="1" fill="none"/><path d="M10.54 3.46 A5 5 0 0 1 3.46 10.54" stroke="#e3e3e3" stroke-width="1" fill="none"/></svg>
<div class="t" style="left:1245.00px;top:522px;font-size:12px;line-height:14px;color:#8a8a8a;color:#a0a0a0;text-shadow:1px 1px 0 #fff;">Days:</div>
<svg style="left:1227px;top:540px" width="14" height="14"><circle cx="7" cy="7" r="6" fill="#f0f0f0"/><path d="M2.76 11.24 A6 6 0 0 1 11.24 2.76" stroke="#a0a0a0" stroke-width="1" fill="none"/><path d="M3.46 10.54 A5 5 0 0 1 10.54 3.46" stroke="#505050" stroke-width="1" fill="none"/><path d="M11.24 2.76 A6 6 0 0 1 2.76 11.24" stroke="#ffffff" stroke-width="1" fill="none"/><path d="M10.54 3.46 A5 5 0 0 1 3.46 10.54" stroke="#e3e3e3" stroke-width="1" fill="none"/><circle cx="7" cy="7" r="2" fill="#808080"/></svg>
<div class="t" style="left:1245.00px;top:541px;font-size:12px;line-height:14px;color:#8a8a8a;color:#a0a0a0;text-shadow:1px 1px 0 #fff;">Weekly</div>
<svg style="left:1227px;top:559px" width="14" height="14"><circle cx="7" cy="7" r="6" fill="#f0f0f0"/><path d="M2.76 11.24 A6 6 0 0 1 11.24 2.76" stroke="#a0a0a0" stroke-width="1" fill="none"/><path d="M3.46 10.54 A5 5 0 0 1 10.54 3.46" stroke="#505050" stroke-width="1" fill="none"/><path d="M11.24 2.76 A6 6 0 0 1 2.76 11.24" stroke="#ffffff" stroke-width="1" fill="none"/><path d="M10.54 3.46 A5 5 0 0 1 3.46 10.54" stroke="#e3e3e3" stroke-width="1" fill="none"/></svg>
<div class="t" style="left:1245.00px;top:560px;font-size:12px;line-height:14px;color:#8a8a8a;color:#a0a0a0;text-shadow:1px 1px 0 #fff;">Monthly</div>
<svg style="left:1227px;top:578px" width="14" height="14"><circle cx="7" cy="7" r="6" fill="#f0f0f0"/><path d="M2.76 11.24 A6 6 0 0 1 11.24 2.76" stroke="#a0a0a0" stroke-width="1" fill="none"/><path d="M3.46 10.54 A5 5 0 0 1 10.54 3.46" stroke="#505050" stroke-width="1" fill="none"/><path d="M11.24 2.76 A6 6 0 0 1 2.76 11.24" stroke="#ffffff" stroke-width="1" fill="none"/><path d="M10.54 3.46 A5 5 0 0 1 3.46 10.54" stroke="#e3e3e3" stroke-width="1" fill="none"/></svg>
<div class="t" style="left:1245.00px;top:579px;font-size:12px;line-height:14px;color:#8a8a8a;color:#a0a0a0;text-shadow:1px 1px 0 #fff;">Quarterly</div>
<svg style="left:1227px;top:597px" width="14" height="14"><circle cx="7" cy="7" r="6" fill="#f0f0f0"/><path d="M2.76 11.24 A6 6 0 0 1 11.24 2.76" stroke="#a0a0a0" stroke-width="1" fill="none"/><path d="M3.46 10.54 A5 5 0 0 1 10.54 3.46" stroke="#505050" stroke-width="1" fill="none"/><path d="M11.24 2.76 A6 6 0 0 1 2.76 11.24" stroke="#ffffff" stroke-width="1" fill="none"/><path d="M10.54 3.46 A5 5 0 0 1 3.46 10.54" stroke="#e3e3e3" stroke-width="1" fill="none"/></svg>
<div class="t" style="left:1245.00px;top:598px;font-size:12px;line-height:14px;color:#8a8a8a;color:#a0a0a0;text-shadow:1px 1px 0 #fff;">Yearly</div>
<div style="left:1300px;top:520px;width:83px;height:22px;background:#f0f0f0;border-top:1px solid #a0a0a0;border-left:1px solid #a0a0a0;border-right:1px solid #fff;border-bottom:1px solid #fff;box-sizing:border-box;"></div>
<div class="t" style="left:1304.00px;top:525px;font-size:12px;line-height:14px;color:#8a8a8a;color:#a0a0a0;text-shadow:1px 1px 0 #fff;">1</div>
<div class="t" style="left:1209.00px;top:634px;font-size:12px;line-height:14px;color:#000;">Graph Draw Type:</div>
<div style="left:1209px;top:651px;width:192px;height:95px;background:#fff;border-top:2px solid #6d6d6d;border-left:2px solid #6d6d6d;border-right:1px solid #fff;border-bottom:1px solid #fff;box-sizing:border-box;"></div>
<div style="left:1211px;top:653px;width:172px;height:15px;background:#3399ff;"></div>
<div class="t" style="left:1213.00px;top:655px;font-size:12px;line-height:14px;color:#fff;">OHLC Bars</div>
<div class="t" style="left:1213.00px;top:670px;font-size:12px;line-height:14px;color:#000;">Candlestick Bars</div>
<div class="t" style="left:1213.00px;top:685px;font-size:12px;line-height:14px;color:#000;">Candlestick Body Only</div>
<div class="t" style="left:1213.00px;top:700px;font-size:12px;line-height:14px;color:#000;">Line on Close</div>
<div class="t" style="left:1213.00px;top:715px;font-size:12px;line-height:14px;color:#000;">Mountain</div>
<div class="t" style="left:1213.00px;top:730px;font-size:12px;line-height:14px;color:#000;">HLC Bars</div>
<div style="left:1383px;top:653px;width:17px;height:92px;background:#f4f4f4;"></div>
<svg style="left:1383px;top:653px" width="17" height="92"><path d="M5 11 l3.5 -4 l3.5 4 z" fill="#333"/><path d="M5 81 l3.5 4 l3.5 -4 z" fill="#333"/><rect x="2.5" y="19.5" width="12" height="17" rx="1.5" fill="#e8e8e8" stroke="#8a8a8a"/><path d="M5.5 24.5 h6 M5.5 27.5 h6 M5.5 30.5 h6" stroke="#666"/></svg>
<div style="left:1209px;top:754px;width:81px;height:26px;background:#f0f0f0;border-top:1px solid #fff;border-left:1px solid #fff;border-right:2px solid #696969;border-bottom:2px solid #696969;box-sizing:border-box;"></div>
<div class="t" style="left:1233.99px;top:761px;font-size:12px;line-height:14px;color:#000;">Scale</div>
<div style="left:1211px;top:791px;width:182px;height:26px;background:#f0f0f0;border-top:1px solid #fff;border-left:1px solid #fff;border-right:2px solid #696969;border-bottom:2px solid #696969;box-sizing:border-box;"></div>
<div class="t" style="left:1222.46px;top:798px;font-size:12px;line-height:14px;color:#000;">Apply Global Symbol Settings</div>
<div style="left:1211px;top:823px;width:182px;height:26px;background:#f0f0f0;border-top:1px solid #fff;border-left:1px solid #fff;border-right:2px solid #696969;border-bottom:2px solid #696969;box-sizing:border-box;"></div>
<div class="t" style="left:1227.13px;top:830px;font-size:12px;line-height:14px;color:#000;">Edit Global Symbol Settings</div>
<div style="left:668px;top:903px;width:86px;height:26px;background:#f0f0f0;border-top:1px solid #fff;border-left:1px solid #fff;border-right:2px solid #696969;border-bottom:2px solid #696969;box-sizing:border-box;"></div>
<div class="t" style="left:701.83px;top:910px;font-size:12px;line-height:14px;color:#000;">OK</div>
<div style="left:761px;top:903px;width:86px;height:26px;background:#f0f0f0;border-top:1px solid #fff;border-left:1px solid #fff;border-right:2px solid #696969;border-bottom:2px solid #696969;box-sizing:border-box;"></div>
<div class="t" style="left:784.82px;top:910px;font-size:12px;line-height:14px;color:#000;">Cancel</div>
<div style="left:854px;top:903px;width:86px;height:26px;background:#f0f0f0;border-top:1px solid #fff;border-left:1px solid #fff;border-right:2px solid #696969;border-bottom:2px solid #696969;box-sizing:border-box;"></div>
<div class="t" style="left:881.49px;top:910px;font-size:12px;line-height:14px;color:#000;">Apply</div>
<div style="left:947px;top:903px;width:86px;height:26px;background:#f0f0f0;border-top:1px solid #fff;border-left:1px solid #fff;border-right:2px solid #696969;border-bottom:2px solid #696969;box-sizing:border-box;"></div>
<div class="t" style="left:977.16px;top:910px;font-size:12px;line-height:14px;color:#000;">Help</div>
<div style="left:1435px;top:433px;width:598px;height:514px;background:#141a1b;border-top:1px solid #c8c8c8;box-sizing:border-box;"></div>
<div style="left:1435px;top:434px;width:598px;height:27px;background:linear-gradient(180deg,rgba(0,0,0,0.0) 0%,rgba(30,80,55,0.45) 45%,rgba(60,20,30,0.35) 80%,rgba(0,0,0,0) 100%);"></div>
<div style="left:1435px;top:434px;width:290px;height:26px;background:radial-gradient(ellipse 285px 26px at 0px 50%,rgba(172,174,176,1) 0%,rgba(168,170,172,1) 78%,rgba(150,152,154,0.5) 90%,rgba(40,44,46,0) 100%);"></div>
<div style="left:1435px;top:434px;width:250px;height:26px;background:linear-gradient(180deg,rgba(0,0,0,0.18) 0%,rgba(255,255,255,0.10) 40%,rgba(0,0,0,0.15) 100%);"></div>
<div class="t" style="left:1436.00px;top:440px;font-size:12px;line-height:14px;color:#000;transform:scaleX(0.9885);transform-origin:0 0;">Chart Settings - YMH4-CBOT  160 Min   #1</div>
<div style="left:1435px;top:461px;width:598px;height:481px;background:#f0f0f0;border-top:1px solid #2a2a2a;border-left:1px solid #2a2a2a;border-bottom:1px solid #2a2a2a;box-sizing:border-box;"></div>
<div style="left:1435px;top:946px;width:598px;height:1px;background:#b8bcbe;"></div>
<div style="left:1436px;top:462px;width:597px;height:477px;border-top:1px solid #fff;border-left:1px solid #fff;box-sizing:border-box;"></div>
<div style="left:1448px;top:492px;width:600px;height:409px;border-top:1px solid #fff;border-left:1px solid #fff;border-bottom:2px solid #696969;box-sizing:border-box;"></div>
<div style="left:1450px;top:473px;width:85px;height:19px;background:#f0f0f0;border-top:1px solid #fff;border-left:1px solid #fff;border-right:2px solid #696969;box-sizing:border-box;"></div>
<div class="t" style="left:1455.00px;top:477px;font-size:12px;line-height:14px;color:#000;">Main Settings</div>
<div style="left:1649px;top:473px;width:121px;height:19px;background:#f0f0f0;border-top:1px solid #fff;border-left:1px solid #fff;border-right:2px solid #696969;box-sizing:border-box;"></div>
<div class="t" style="left:1654.00px;top:477px;font-size:12px;line-height:14px;color:#000;">Advanced Settings 2</div>
<div style="left:1770px;top:473px;width:42px;height:19px;background:#f0f0f0;border-top:1px solid #fff;border-left:1px solid #fff;border-right:2px solid #696969;box-sizing:border-box;"></div>
<div class="t" style="left:1776.00px;top:477px;font-size:12px;line-height:14px;color:#000;">Alerts</div>
<div style="left:1535px;top:471px;width:115px;height:23px;background:#f0f0f0;border-top:1px solid #fff;border-left:1px solid #fff;border-right:2px solid #696969;box-sizing:border-box;"></div>
<div class="t" style="left:1542.00px;top:475px;font-size:12px;line-height:14px;color:#000;">Advanced Settings</div>
<div style="left:1461px;top:506px;width:13px;height:13px;background:#fff;border-top:2px solid #808080;border-left:2px solid #808080;border-right:1px solid #fff;border-bottom:1px solid #fff;box-sizing:border-box;"></div>
<div class="t" style="left:1479.00px;top:507px;font-size:12px;line-height:14px;color:#000;">Display Region Dividing Lines</div>
<div style="left:1461px;top:531px;width:13px;height:13px;background:#fff;border-top:2px solid #808080;border-left:2px solid #808080;border-right:1px solid #fff;border-bottom:1px solid #fff;box-sizing:border-box;"></div>
<svg style="left:1461px;top:531px" width="13" height="13" shape-rendering="crispEdges"><path d="M3 5h1v1h1v1h1v-1h1v-1h1v-1h1v-1h1v3h-1v1h-1v1h-1v1h-1v1h-1v-1h-1v-1h-1v-1h-1z" fill="#000"/></svg>
<div class="t" style="left:1479.00px;top:532px;font-size:12px;line-height:14px;color:#000;">Display Main Price Graph Values in Values Windows</div>
<div style="left:1461px;top:555px;width:13px;height:13px;background:#fff;border-top:2px solid #808080;border-left:2px solid #808080;border-right:1px solid #fff;border-bottom:1px solid #fff;box-sizing:border-box;"></div>
<svg style="left:1461px;top:555px" width="13" height="13" shape-rendering="crispEdges"><path d="M3 5h1v1h1v1h1v-1h1v-1h1v-1h1v-1h1v3h-1v1h-1v1h-1v1h-1v1h-1v-1h-1v-1h-1v-1h-1z" fill="#000"/></svg>
<div class="t" style="left:1479.00px;top:556px;font-size:12px;line-height:14px;color:#000;">Draw Non-Highlight Chart Drawings Underneath Main Graph and Studies</div>
<div style="left:1461px;top:579px;width:13px;height:13px;background:#fff;border-top:2px solid #808080;border-left:2px solid #808080;border-right:1px solid #fff;border-bottom:1px solid #fff;box-sizing:border-box;"></div>
<svg style="left:1461px;top:579px" width="13" height="13" shape-rendering="crispEdges"><path d="M3 5h1v1h1v1h1v-1h1v-1h1v-1h1v-1h1v3h-1v1h-1v1h-1v1h-1v1h-1v-1h-1v-1h-1v-1h-1z" fill="#000"/></svg>
<div class="t" style="left:1479.00px;top:580px;font-size:12px;line-height:14px;color:#000;">Draw Highlight Drawings Underneath Main Graph and Studies</div>
<div style="left:1461px;top:604px;width:13px;height:13px;background:#fff;border-top:2px solid #808080;border-left:2px solid #808080;border-right:1px solid #fff;border-bottom:1px solid #fff;box-sizing:border-box;"></div>
<div class="t" style="left:1479.00px;top:605px;font-size:12px;line-height:14px;color:#000;">Display Day Of Week With Dates On Intraday Chart Time Scale</div>
<div style="left:1461px;top:626px;width:13px;height:13px;background:#fff;border-top:2px solid #808080;border-left:2px solid #808080;border-right:1px solid #fff;border-bottom:1px solid #fff;box-sizing:border-box;"></div>
<svg style="left:1461px;top:626px" width="13" height="13" shape-rendering="crispEdges"><path d="M3 5h1v1h1v1h1v-1h1v-1h1v-1h1v-1h1v3h-1v1h-1v1h-1v1h-1v1h-1v-1h-1v-1h-1v-1h-1z" fill="#000"/></svg>
<div class="t" style="left:1479.00px;top:627px;font-size:12px;line-height:14px;color:#000;">Highlight Timescale Dates, Months and Years</div>
<div style="left:1461px;top:651px;width:13px;height:13px;background:#fff;border-top:2px solid #808080;border-left:2px solid #808080;border-right:1px solid #fff;border-bottom:1px solid #fff;box-sizing:border-box;"></div>
<svg style="left:1461px;top:651px" width="13" height="13" shape-rendering="crispEdges"><path d="M3 5h1v1h1v1h1v-1h1v-1h1v-1h1v-1h1v3h-1v1h-1v1h-1v1h-1v1h-1v-1h-1v-1h-1v-1h-1z" fill="#000"/></svg>
<div class="t" style="left:1479.00px;top:652px;font-size:12px;line-height:14px;color:#000;">Adjust Tool Values to Tick Size</div>
<div style="left:1461px;top:701px;width:13px;height:13px;background:#fff;border-top:2px solid #808080;border-left:2px solid #808080;border-right:1px solid #fff;border-bottom:1px solid #fff;box-sizing:border-box;"></div>
<svg style="left:1461px;top:701px" width="13" height="13" shape-rendering="crispEdges"><path d="M3 5h1v1h1v1h1v-1h1v-1h1v-1h1v-1h1v3h-1v1h-1v1h-1v1h-1v1h-1v-1h-1v-1h-1v-1h-1z" fill="#000"/></svg>
<div class="t" style="left:1479.00px;top:702px;font-size:12px;line-height:14px;color:#000;">Split Data Records</div>
<div style="left:1461px;top:726px;width:13px;height:13px;background:#fff;border-top:2px solid #808080;border-left:2px solid #808080;border-right:1px solid #fff;border-bottom:1px solid #fff;box-sizing:border-box;"></div>
<div class="t" style="left:1479.00px;top:727px;font-size:12px;line-height:14px;color:#000;">Disable Data File U</div>
<div style="left:1461px;top:750px;width:13px;height:13px;background:#fff;border-top:2px solid #808080;border-left:2px solid #808080;border-right:1px solid #fff;border-bottom:1px solid #fff;box-sizing:border-box;"></div>
<div class="t" style="left:1479.00px;top:751px;font-size:12px;line-height:14px;color:#000;">Include Weekend C</div>
<div style="left:1461px;top:774px;width:13px;height:13px;background:#fff;border-top:2px solid #808080;border-left:2px solid #808080;border-right:1px solid #fff;border-bottom:1px solid #fff;box-sizing:border-box;"></div>
<div class="t" style="left:1479.00px;top:775px;font-size:12px;line-height:14px;color:#000;">Do Not Draw Columns With No Data</div>
<div style="left:1461px;top:799px;width:13px;height:13px;background:#fff;border-top:2px solid #808080;border-left:2px solid #808080;border-right:1px solid #fff;border-bottom:1px solid #fff;box-sizing:border-box;"></div>
<div class="t" style="left:1479.00px;top:800px;font-size:12px;line-height:14px;color:#000;">Apply Intraday Session Times To Intraday Chart</div>
<div style="left:1461px;top:824px;width:13px;height:13px;background:#fff;border-top:2px solid #808080;border-left:2px solid #808080;border-right:1px solid #fff;border-bottom:1px solid #fff;box-sizing:border-box;"></div>
<div class="t" style="left:1479.00px;top:825px;font-size:12px;line-height:14px;color:#000;">Combine Sun-Mon Daily Bars</div>
<div style="left:1707px;top:506px;width:13px;height:13px;background:#fff;border-top:2px solid #808080;border-left:2px solid #808080;border-right:1px solid #fff;border-bottom:1px solid #fff;box-sizing:border-box;"></div>
<div class="t" style="left:1724.00px;top:507px;font-size:12px;line-height:14px;color:#000;">Use Left Side Scale</div>
<div style="left:1792px;top:526px;width:70px;height:24px;background:#f0f0f0;border-top:1px solid #fff;border-left:1px solid #fff;border-right:2px solid #696969;border-bottom:2px solid #696969;box-sizing:border-box;"></div>
<div class="t" style="left:1804.82px;top:531px;font-size:12px;line-height:14px;color:#000;">Settings</div>
<div style="left:1932px;top:508px;width:13px;height:13px;background:#fff;border-top:2px solid #808080;border-left:2px solid #808080;border-right:1px solid #fff;border-bottom:1px solid #fff;box-sizing:border-box;"></div>
<div class="t" style="left:1950.00px;top:509px;font-size:12px;line-height:14px;color:#000;">Hide Values Sc</div>
<div style="left:1932px;top:528px;width:13px;height:13px;background:#fff;border-top:2px solid #808080;border-left:2px solid #808080;border-right:1px solid #fff;border-bottom:1px solid #fff;box-sizing:border-box;"></div>
<div class="t" style="left:1950.00px;top:529px;font-size:12px;line-height:14px;color:#000;">Hide Time Scal</div>
<div style="left:1932px;top:549px;width:13px;height:13px;background:#fff;border-top:2px solid #808080;border-left:2px solid #808080;border-right:1px solid #fff;border-bottom:1px solid #fff;box-sizing:border-box;"></div>
<svg style="left:1932px;top:549px" width="13" height="13" shape-rendering="crispEdges"><path d="M3 5h1v1h1v1h1v-1h1v-1h1v-1h1v-1h1v3h-1v1h-1v1h-1v1h-1v1h-1v-1h-1v-1h-1v-1h-1z" fill="#000"/></svg>
<div class="t" style="left:1950.00px;top:550px;font-size:12px;line-height:14px;color:#000;">Lock Fill Space</div>
<div style="left:1932px;top:570px;width:13px;height:13px;background:#fff;border-top:2px solid #808080;border-left:2px solid #808080;border-right:1px solid #fff;border-bottom:1px solid #fff;box-sizing:border-box;"></div>
<div class="t" style="left:1950.00px;top:571px;font-size:12px;line-height:14px;color:#000;">Attach Trade W</div>
<div style="left:1932px;top:591px;width:13px;height:13px;background:#fff;border-top:2px solid #808080;border-left:2px solid #808080;border-right:1px solid #fff;border-bottom:1px solid #fff;box-sizing:border-box;"></div>
<div class="t" style="left:1950.00px;top:592px;font-size:12px;line-height:14px;color:#000;">Align Order Car</div>
<div style="left:1932px;top:643px;width:13px;height:13px;background:#fff;border-top:2px solid #808080;border-left:2px solid #808080;border-right:1px solid #fff;border-bottom:1px solid #fff;box-sizing:border-box;"></div>
<div class="t" style="left:1950.00px;top:644px;font-size:12px;line-height:14px;color:#000;">Align Trade Dra</div>
<div class="t" style="left:1941.00px;top:618px;font-size:12px;line-height:14px;color:#000;">Trade Drawings I</div>
<div class="t" style="left:1668.00px;top:652px;font-size:12px;line-height:14px;color:#000;">Historical Pullback Data:</div>
<div style="left:1804px;top:648px;width:104px;height:22px;background:#fff;border-top:2px solid #6d6d6d;border-left:2px solid #6d6d6d;border-right:1px solid #fff;border-bottom:1px solid #fff;box-sizing:border-box;"></div>
<div style="left:1890px;top:650px;width:17px;height:19px;background:#f0f0f0;border-top:1px solid #fff;border-left:1px solid #fff;border-right:1px solid #696969;border-bottom:1px solid #696969;box-sizing:border-box;"></div>
<svg style="left:1890px;top:650px" width="17" height="19"><path d="M4.5 8.0 h7 l-3.5 4 z" fill="#000"/></svg>
<div class="t" style="left:1808.00px;top:654px;font-size:12px;line-height:14px;color:#000;">None</div>
<div class="t" style="left:1464.00px;top:678px;font-size:12px;line-height:14px;color:#000;">Continuous Contract:</div>
<div style="left:1584px;top:675px;width:324px;height:21px;background:#fff;border-top:2px solid #6d6d6d;border-left:2px solid #6d6d6d;border-right:1px solid #fff;border-bottom:1px solid #fff;box-sizing:border-box;"></div>
<div style="left:1890px;top:677px;width:17px;height:18px;background:#f0f0f0;border-top:1px solid #fff;border-left:1px solid #fff;border-right:1px solid #696969;border-bottom:1px solid #696969;box-sizing:border-box;"></div>
<svg style="left:1890px;top:677px" width="17" height="18"><path d="M4.5 7.5 h7 l-3.5 4 z" fill="#000"/></svg>
<div class="t" style="left:1588.00px;top:680px;font-size:12px;line-height:14px;color:#000;">Continuous Futures Contract - Date Rule Rollover, Back</div>
<div style="left:1735px;top:774px;width:13px;height:13px;background:#fff;border-top:2px solid #808080;border-left:2px solid #808080;border-right:1px solid #fff;border-bottom:1px solid #fff;box-sizing:border-box;"></div>
<div class="t" style="left:1752.00px;top:775px;font-size:12px;line-height:14px;color:#000;">Include Columns With No Data</div>
<div class="t" style="left:1935.00px;top:775px;font-size:12px;line-height:14px;color:#000;">Dates To Exclude:</div>
<div style="left:1932px;top:793px;width:110px;height:21px;background:#fff;border-top:2px solid #6d6d6d;border-left:2px solid #6d6d6d;border-right:1px solid #fff;border-bottom:1px solid #fff;box-sizing:border-box;"></div>
<div class="t" style="left:1986.00px;top:695px;font-size:12px;line-height:14px;color:#000;">rofit/Loss</div>
<div style="left:1986px;top:713px;width:60px;height:22px;background:#fff;border-top:2px solid #6d6d6d;border-left:2px solid #6d6d6d;border-right:1px solid #fff;border-bottom:1px solid #fff;box-sizing:border-box;"></div>
<div class="t" style="left:1978.00px;top:745px;font-size:12px;line-height:14px;color:#000;">Of Forwar</div>
<div class="t" style="left:1979.00px;top:720px;font-size:12px;line-height:14px;color:#c00000;">0</div>
<div style="left:1584px;top:697px;width:403px;height:77px;background:#fff;border:1px solid #646464;box-sizing:border-box;"></div>
<div style="left:1585px;top:744px;width:401px;height:15px;background:#3399ff;"></div>
<div class="t" style="left:1588.00px;top:700px;font-size:12px;line-height:14px;color:#000;">None</div>
<div class="t" style="left:1588.00px;top:715px;font-size:12px;line-height:14px;color:#000;">Continuous Futures Contract - Date Rule Rollover</div>
<div class="t" style="left:1588.00px;top:730px;font-size:12px;line-height:14px;color:#000;">Continuous Futures Contract - Volume Based Rollover</div>
<div class="t" style="left:1588.00px;top:745px;font-size:12px;line-height:14px;color:#fff;">Continuous Futures Contract - Date Rule Rollover, Back Adjusted</div>
<div class="t" style="left:1588.00px;top:760px;font-size:12px;line-height:14px;color:#000;">Continuous Futures Contract - Volume Based Rollover, Back Adjusted</div>
<div style="left:1447px;top:904px;width:86px;height:26px;background:#f0f0f0;border-top:1px solid #fff;border-left:1px solid #fff;border-right:2px solid #696969;border-bottom:2px solid #696969;box-sizing:border-box;"></div>
<div class="t" style="left:1480.83px;top:911px;font-size:12px;line-height:14px;color:#000;">OK</div>
<div style="left:1540px;top:904px;width:86px;height:26px;background:#f0f0f0;border-top:1px solid #fff;border-left:1px solid #fff;border-right:2px solid #696969;border-bottom:2px solid #696969;box-sizing:border-box;"></div>
<div class="t" style="left:1563.82px;top:911px;font-size:12px;line-height:14px;color:#000;">Cancel</div>
<div style="left:1633px;top:904px;width:86px;height:26px;background:#f0f0f0;border-top:1px solid #fff;border-left:1px solid #fff;border-right:2px solid #696969;border-bottom:2px solid #696969;box-sizing:border-box;"></div>
<div class="t" style="left:1660.49px;top:911px;font-size:12px;line-height:14px;color:#000;">Apply</div>
<div style="left:1726px;top:904px;width:86px;height:26px;background:#f0f0f0;border-top:1px solid #fff;border-left:1px solid #fff;border-right:2px solid #696969;border-bottom:2px solid #696969;box-sizing:border-box;"></div>
<div class="t" style="left:1756.16px;top:911px;font-size:12px;line-height:14px;color:#000;">Help</div>
<div style="left:0px;top:1061px;width:16px;height:15px;background:#fff;"></div>
<div style="left:0px;top:1057px;width:1px;height:4px;background:#fff;"></div>
<div class="t" style="left:1.50px;top:1062px;font-size:12px;line-height:14px;color:#000;transform:scaleX(0.7495);transform-origin:0 0;">-17</div>
<div style="left:23px;top:1061px;width:25px;height:15px;background:#fff;"></div>
<div style="left:23px;top:1057px;width:1px;height:4px;background:#fff;"></div>
<div class="t" style="left:24.50px;top:1062px;font-size:12px;line-height:14px;color:#000;transform:scaleX(0.9160);transform-origin:0 0;">10-1</div>
<div style="left:55px;top:1061px;width:32px;height:15px;background:#fff;"></div>
<div style="left:55px;top:1057px;width:1px;height:4px;background:#fff;"></div>
<div class="t" style="left:56.50px;top:1062px;font-size:12px;line-height:14px;color:#000;transform:scaleX(0.9448);transform-origin:0 0;">10-16</div>
<div style="left:96px;top:1061px;width:31px;height:15px;background:#fff;"></div>
<div style="left:96px;top:1057px;width:1px;height:4px;background:#fff;"></div>
<div class="t" style="left:97.50px;top:1062px;font-size:12px;line-height:14px;color:#000;transform:scaleX(0.9123);transform-origin:0 0;">10-30</div>
<div style="left:135px;top:1061px;width:31px;height:15px;background:#fff;"></div>
<div style="left:135px;top:1057px;width:1px;height:4px;background:#fff;"></div>
<div class="t" style="left:136.50px;top:1062px;font-size:12px;line-height:14px;color:#000;transform:scaleX(0.9395);transform-origin:0 0;">11-12</div>
<div style="left:175px;top:1061px;width:31px;height:15px;background:#fff;"></div>
<div style="left:175px;top:1057px;width:1px;height:4px;background:#fff;"></div>
<div class="t" style="left:176.50px;top:1062px;font-size:12px;line-height:14px;color:#000;transform:scaleX(0.9395);transform-origin:0 0;">11-21</div>
<div style="left:215px;top:1061px;width:31px;height:15px;background:#fff;"></div>
<div style="left:215px;top:1057px;width:1px;height:4px;background:#fff;"></div>
<div class="t" style="left:216.50px;top:1062px;font-size:12px;line-height:14px;color:#000;transform:scaleX(0.9395);transform-origin:0 0;">11-28</div>
<div style="left:256px;top:1061px;width:25px;height:15px;background:#fff;"></div>
<div style="left:256px;top:1057px;width:1px;height:4px;background:#fff;"></div>
<div class="t" style="left:257.50px;top:1062px;font-size:12px;line-height:14px;color:#000;transform:scaleX(0.9160);transform-origin:0 0;">12-5</div>
<div style="left:290px;top:1061px;width:32px;height:15px;background:#fff;"></div>
<div style="left:290px;top:1057px;width:1px;height:4px;background:#fff;"></div>
<div class="t" style="left:291.50px;top:1062px;font-size:12px;line-height:14px;color:#000;transform:scaleX(0.9731);transform-origin:0 0;">12-11</div>
<div style="left:336px;top:1061px;width:31px;height:15px;background:#fff;"></div>
<div style="left:336px;top:1057px;width:1px;height:4px;background:#fff;"></div>
<div class="t" style="left:337.50px;top:1062px;font-size:12px;line-height:14px;color:#000;transform:scaleX(0.9123);transform-origin:0 0;">12-18</div>
<div style="left:380px;top:1061px;width:32px;height:15px;background:#fff;"></div>
<div style="left:380px;top:1057px;width:1px;height:4px;background:#fff;"></div>
<div class="t" style="left:381.50px;top:1062px;font-size:12px;line-height:14px;color:#000;transform:scaleX(0.9448);transform-origin:0 0;">12-26</div>
<div style="left:419px;top:1061px;width:20px;height:15px;background:#fff;"></div>
<div style="left:419px;top:1057px;width:1px;height:4px;background:#fff;"></div>
<div class="t" style="left:420.50px;top:1062px;font-size:12px;line-height:14px;color:#000;transform:scaleX(0.9801);transform-origin:0 0;">1-2</div>
<div style="left:451px;top:1061px;width:20px;height:15px;background:#fff;"></div>
<div style="left:451px;top:1057px;width:1px;height:4px;background:#fff;"></div>
<div class="t" style="left:452.50px;top:1062px;font-size:12px;line-height:14px;color:#000;transform:scaleX(0.9801);transform-origin:0 0;">1-8</div>
<div style="left:485px;top:1061px;width:25px;height:15px;background:#fff;"></div>
<div style="left:485px;top:1057px;width:1px;height:4px;background:#fff;"></div>
<div class="t" style="left:486.50px;top:1062px;font-size:12px;line-height:14px;color:#000;transform:scaleX(0.9160);transform-origin:0 0;">1-14</div>
<div style="left:522px;top:1061px;width:25px;height:15px;background:#fff;"></div>
<div style="left:522px;top:1057px;width:1px;height:4px;background:#fff;"></div>
<div class="t" style="left:523.50px;top:1062px;font-size:12px;line-height:14px;color:#000;transform:scaleX(0.9160);transform-origin:0 0;">1-19</div>
<div style="left:558px;top:1061px;width:25px;height:15px;background:#fff;"></div>
<div style="left:558px;top:1057px;width:1px;height:4px;background:#fff;"></div>
<div class="t" style="left:559.50px;top:1062px;font-size:12px;line-height:14px;color:#000;transform:scaleX(0.9160);transform-origin:0 0;">1-24</div>
<div style="left:595px;top:1061px;width:25px;height:15px;background:#fff;"></div>
<div style="left:595px;top:1057px;width:1px;height:4px;background:#fff;"></div>
<div class="t" style="left:596.50px;top:1062px;font-size:12px;line-height:14px;color:#000;transform:scaleX(0.9160);transform-origin:0 0;">1-30</div>
<div style="left:633px;top:1061px;width:21px;height:15px;background:#fff;"></div>
<div style="left:633px;top:1057px;width:1px;height:4px;background:#fff;"></div>
<div class="t" style="left:634.50px;top:1062px;font-size:12px;line-height:14px;color:#000;transform:scaleX(1.0378);transform-origin:0 0;">2-3</div>
<div style="left:661px;top:1061px;width:20px;height:15px;background:#fff;"></div>
<div style="left:661px;top:1057px;width:1px;height:4px;background:#fff;"></div>
<div class="t" style="left:662.50px;top:1062px;font-size:12px;line-height:14px;color:#000;transform:scaleX(0.9801);transform-origin:0 0;">2-6</div>
<div style="left:687px;top:1061px;width:118px;height:15px;background:#fff;"></div>
<div class="t" style="left:692.00px;top:1062px;font-size:12px;line-height:14px;color:#000;transform:scaleX(0.9411);transform-origin:0 0;">2014-02-14  10:40:00</div>
<div style="left:2020px;top:1061px;width:13px;height:15px;background:#00c800;"></div>
<div class="t" style="left:2023.00px;top:1062px;font-size:12px;line-height:14px;color:#fff;">0</div>
<div style="left:0px;top:1078px;width:2033px;height:9px;background:#f0f0f0;"></div>
<svg style="left:0;top:1078px" width="20" height="9"><path d="M9 1 l-5 4 l5 4 z" fill="#a0a0a0"/></svg>
<div class="t" style="left:5.00px;top:128px;font-size:12px;line-height:14px;color:#fff;transform:scaleX(0.9499);transform-origin:0 0;">YMH4-CBOT  160 Min   #1</div>
<div style="left:146px;top:127px;width:46px;height:15px;background:#fff;"></div>
<div class="t" style="left:147.00px;top:128px;font-size:12px;line-height:14px;color:#000;transform:scaleX(0.9175);transform-origin:0 0;">C=15862</div>
<div class="t" style="left:197.00px;top:128px;font-size:12px;line-height:14px;color:#fff;transform:scaleX(0.9185);transform-origin:0 0;">T=11900</div>
<div style="left:243px;top:127px;width:42px;height:15px;background:#00c000;"></div>
<div class="t" style="left:244.00px;top:128px;font-size:12px;line-height:14px;color:#003000;transform:scaleX(0.9441);transform-origin:0 0;">Chg=12</div>
<div style="left:288px;top:127px;width:50px;height:15px;background:#00c000;"></div>
<div class="t" style="left:289.00px;top:128px;font-size:12px;line-height:14px;color:#003000;transform:scaleX(0.9601);transform-origin:0 0;">DChg=75</div>
<div class="t" style="left:342.00px;top:128px;font-size:12px;line-height:14px;color:#fff;transform:scaleX(0.9319);transform-origin:0 0;">2014-01-28 20:13:09 H=15873 L=15849</div>
<div class="t" style="left:545.60px;top:128px;font-size:12px;line-height:14px;color:#fff;transform:scaleX(0.9208);transform-origin:0 0;">O=15852 V=18882</div>
<div class="t" style="left:643.00px;top:128px;font-size:12px;line-height:14px;color:#fff;transform:scaleX(0.8950);transform-origin:0 0;">B=15861</div>
<div class="t" style="left:691.00px;top:128px;font-size:12px;line-height:14px;color:#fff;transform:scaleX(0.9298);transform-origin:0 0;">A=15862 13x10 TR:1h 6m 51s BV=9949 AV=8933 DV=139198</div>
<div class="t" style="left:1009.00px;top:128px;font-size:12px;line-height:14px;color:#fff;transform:scaleX(1.0217);transform-origin:0 0;">kompozitni_profil</div>
<div class="t" style="left:1108.00px;top:128px;font-size:12px;line-height:14px;color:#ff00ff;transform:scaleX(0.9776);transform-origin:0 0;">Point of Control: 16354</div>
<div class="t" style="left:1238.00px;top:128px;font-size:12px;line-height:14px;color:#fff;transform:scaleX(0.9545);transform-origin:0 0;">(2, From Start Date-Time To End, Days, 1, 50, 10.3.2009, No, 0:00:00, , 0:00:00, Yes, Window Width, 30, Yes, None, No, No, Separate Bid/Ask Volume</div>
</body></html>
